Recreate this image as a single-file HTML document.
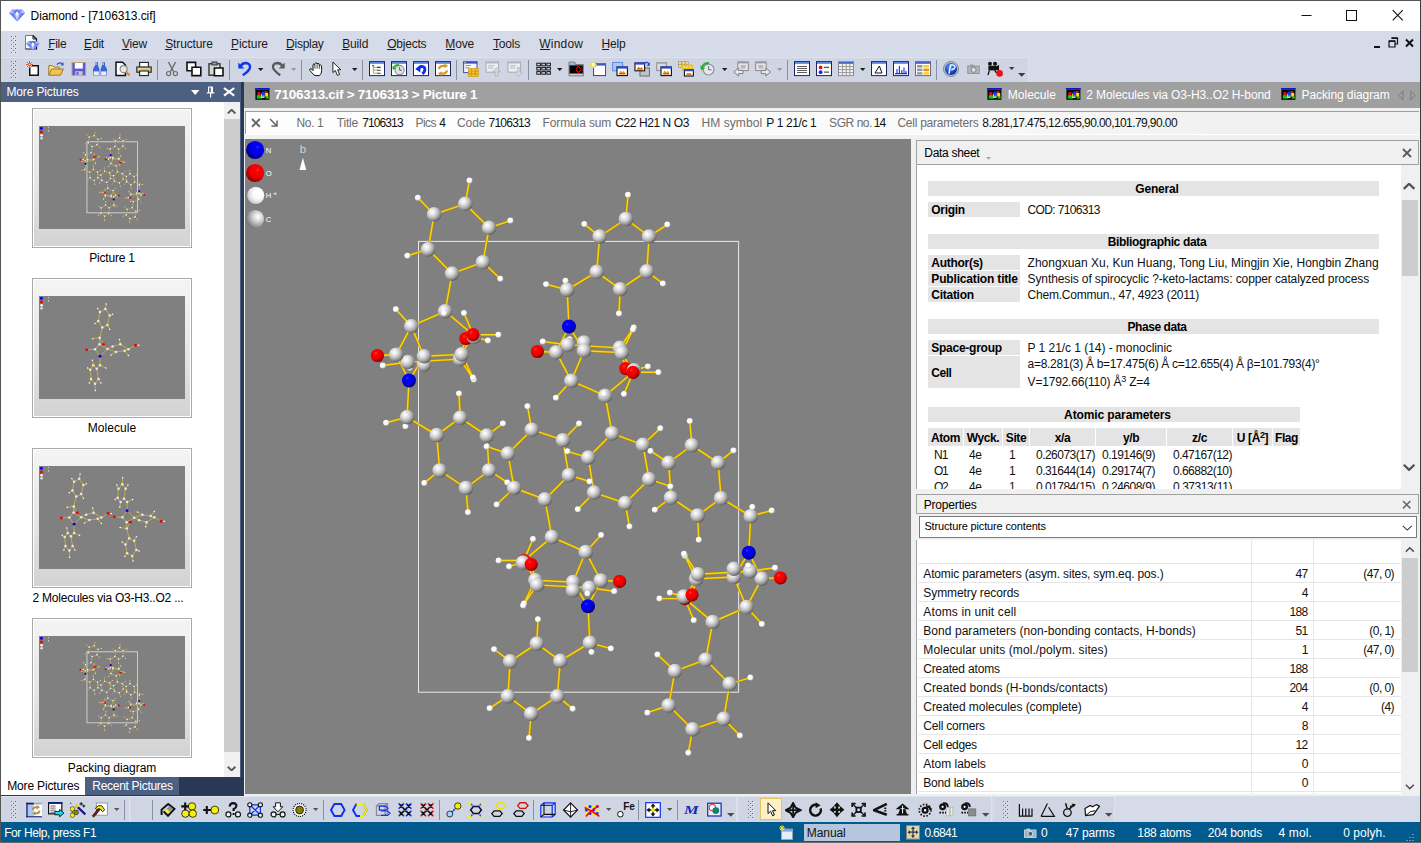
<!DOCTYPE html>
<html><head><meta charset="utf-8"><title>Diamond - [7106313.cif]</title>
<style>
html,body{margin:0;padding:0;overflow:hidden;}
html{font-family:"Liberation Sans",sans-serif;width:1421px;height:843px;}
body{width:1421px;height:843px;overflow:hidden;background:#fff;position:relative;font-family:"Liberation Sans",sans-serif;font-size:12px;}
div,span.t,svg{position:absolute;}
span.t{white-space:pre;}
u{text-decoration:underline;text-underline-offset:1px;}
</style></head>
<body>
<div style="left:0px;top:0px;width:1421px;height:31px;background:#fff;"></div>
<span class="t" style="top:8.84px;font-size:12px;line-height:14px;color:#000;letter-spacing:-0.105px;left:30.6px;">Diamond - [7106313.cif]</span>
<div style="left:0px;top:31px;width:1421px;height:26px;background:#D6DBE9;"></div>
<span class="t" style="top:36.64px;font-size:12px;line-height:14px;color:#1b1b1b;letter-spacing:-0.361px;left:48.3px;">File</span>
<span class="t" style="top:36.64px;font-size:12px;line-height:14px;color:#1b1b1b;letter-spacing:-0.197px;left:84.1px;">Edit</span>
<span class="t" style="top:36.64px;font-size:12px;line-height:14px;color:#1b1b1b;letter-spacing:-0.199px;left:122px;">View</span>
<span class="t" style="top:36.64px;font-size:12px;line-height:14px;color:#1b1b1b;letter-spacing:-0.121px;left:165.2px;">Structure</span>
<span class="t" style="top:36.64px;font-size:12px;line-height:14px;color:#1b1b1b;letter-spacing:-0.051px;left:231px;">Picture</span>
<span class="t" style="top:36.64px;font-size:12px;line-height:14px;color:#1b1b1b;letter-spacing:-0.266px;left:286.1px;">Display</span>
<span class="t" style="top:36.64px;font-size:12px;line-height:14px;color:#1b1b1b;letter-spacing:-0.138px;left:342.2px;">Build</span>
<span class="t" style="top:36.64px;font-size:12px;line-height:14px;color:#1b1b1b;letter-spacing:-0.213px;left:387.2px;">Objects</span>
<span class="t" style="top:36.64px;font-size:12px;line-height:14px;color:#1b1b1b;letter-spacing:-0.161px;left:445.3px;">Move</span>
<span class="t" style="top:36.64px;font-size:12px;line-height:14px;color:#1b1b1b;letter-spacing:-0.203px;left:493px;">Tools</span>
<span class="t" style="top:36.64px;font-size:12px;line-height:14px;color:#1b1b1b;letter-spacing:0.202px;left:539.3px;">Window</span>
<span class="t" style="top:36.64px;font-size:12px;line-height:14px;color:#1b1b1b;letter-spacing:-0.172px;left:601.4px;">Help</span>
<div style="left:0px;top:57px;width:1421px;height:25px;background:#D6DBE9;"></div>
<div style="left:1px;top:57px;width:1028px;height:25px;background:#D0D5E4;border-top:1px solid #DEE3EF;border-right:1px solid #DEE3EF;box-sizing:border-box;"></div>
<div style="left:0px;top:82px;width:240px;height:20px;background:#4D6082;"></div>
<span class="t" style="top:84.54px;font-size:12px;line-height:14px;color:#fff;letter-spacing:-0.133px;left:6.4px;">More Pictures</span>
<div style="left:0px;top:102px;width:240px;height:675px;background:#fff;"></div>
<div style="left:224px;top:102px;width:15.5px;height:675px;background:#F0F0F0;"></div>
<div style="left:224px;top:119px;width:15.5px;height:633px;background:#CDCDCD;"></div>
<div style="left:0px;top:777px;width:244px;height:19px;background:#293955;"></div>
<div style="left:1px;top:777px;width:84px;height:18px;background:#fff;"></div>
<div style="left:85px;top:777px;width:94px;height:18px;background:#4D6082;"></div>
<span class="t" style="top:779.24px;font-size:12px;line-height:14px;color:#000;letter-spacing:-0.149px;left:7.2px;">More Pictures</span>
<span class="t" style="top:779.24px;font-size:12px;line-height:14px;color:#fff;letter-spacing:-0.294px;left:92.3px;">Recent Pictures</span>
<div style="left:240px;top:82px;width:1px;height:695px;background:#4D6082;"></div>
<div style="left:241px;top:82px;width:3px;height:714px;background:#293955;"></div>
<div style="left:244px;top:82px;width:1177px;height:26px;background:#A0A0A0;"></div>
<span class="t" style="top:87.32px;font-size:13.5px;line-height:16px;color:#fff;letter-spacing:-0.286px;font-weight:700;left:274.3px;">7106313.cif &gt; 7106313 &gt; Picture 1</span>
<span class="t" style="top:88.14px;font-size:12px;line-height:14px;color:#fff;letter-spacing:0.034px;left:1007.7px;">Molecule</span>
<span class="t" style="top:88.14px;font-size:12px;line-height:14px;color:#fff;letter-spacing:-0.070px;left:1086.2px;">2 Molecules via O3-H3..O2 H-bond</span>
<span class="t" style="top:88.14px;font-size:12px;line-height:14px;color:#fff;letter-spacing:-0.086px;left:1301.5px;">Packing diagram</span>
<div style="left:244px;top:108px;width:1177px;height:31px;background:#F0F0F0;"></div>
<div style="left:245px;top:111px;width:1174px;height:23px;background:linear-gradient(90deg,#FDFDFD 0%,#FAFAFA 60%,#F0F0F0 85%);border-top:1px solid #A0A0A0;border-left:1px solid #A0A0A0;box-sizing:border-box;"></div>
<div style="left:245px;top:134px;width:1174px;height:1px;background:#fff;"></div>
<span class="t" style="top:116.24px;font-size:12px;line-height:14px;color:#6d6d6d;letter-spacing:-0.398px;left:296.6px;">No. 1</span>
<span class="t" style="top:116.24px;font-size:12px;line-height:14px;color:#6d6d6d;letter-spacing:-0.187px;left:336.8px;">Title</span>
<span class="t" style="top:116.24px;font-size:12px;line-height:14px;color:#111;letter-spacing:-0.888px;left:362.2px;">7106313</span>
<span class="t" style="top:116.24px;font-size:12px;line-height:14px;color:#6d6d6d;letter-spacing:-0.593px;left:415.5px;">Pics</span>
<span class="t" style="top:116.24px;font-size:12px;line-height:14px;color:#111;letter-spacing:-1.587px;left:439.2px;">4</span>
<span class="t" style="top:116.24px;font-size:12px;line-height:14px;color:#6d6d6d;letter-spacing:-0.147px;left:457.1px;">Code</span>
<span class="t" style="top:116.24px;font-size:12px;line-height:14px;color:#111;letter-spacing:-0.788px;left:488.6px;">7106313</span>
<span class="t" style="top:116.24px;font-size:12px;line-height:14px;color:#6d6d6d;letter-spacing:-0.129px;left:542.6px;">Formula sum</span>
<span class="t" style="top:116.24px;font-size:12px;line-height:14px;color:#111;letter-spacing:-0.425px;left:615.3px;">C22 H21 N O3</span>
<span class="t" style="top:116.24px;font-size:12px;line-height:14px;color:#6d6d6d;letter-spacing:0.087px;left:701.4px;">HM symbol</span>
<span class="t" style="top:116.24px;font-size:12px;line-height:14px;color:#111;letter-spacing:-0.383px;left:766.3px;">P 1 21/c 1</span>
<span class="t" style="top:116.24px;font-size:12px;line-height:14px;color:#6d6d6d;letter-spacing:-0.447px;left:829.1px;">SGR no.</span>
<span class="t" style="top:116.24px;font-size:12px;line-height:14px;color:#111;letter-spacing:-0.980px;left:873.8px;">14</span>
<span class="t" style="top:116.24px;font-size:12px;line-height:14px;color:#6d6d6d;letter-spacing:-0.247px;left:897.4px;">Cell parameters</span>
<span class="t" style="top:116.24px;font-size:12px;line-height:14px;color:#111;letter-spacing:-0.584px;left:982.3px;">8.281,17.475,12.655,90.00,101.79,90.00</span>
<div style="left:244px;top:139px;width:1px;height:657px;background:#F0F0F0;"></div>
<div style="left:245px;top:139px;width:666px;height:655px;background:#808080;"></div>
<div style="left:245px;top:794px;width:672px;height:2px;background:#F0F0F0;"></div>
<div style="left:911px;top:139px;width:6px;height:657px;background:#F0F0F0;"></div>
<div style="left:917px;top:139px;width:504px;height:657px;background:#F0F0F0;"></div>
<div style="left:0px;top:796px;width:1421px;height:26px;background:#D6DBE9;"></div>
<div style="left:1px;top:796px;width:129px;height:26px;background:#D0D5E4;border-top:1px solid #DEE3EF;border-right:1px solid #DEE3EF;box-sizing:border-box;"></div>
<div style="left:131px;top:796px;width:606px;height:26px;background:#D0D5E4;border-top:1px solid #DEE3EF;border-right:1px solid #DEE3EF;box-sizing:border-box;"></div>
<div style="left:739px;top:796px;width:253px;height:26px;background:#D0D5E4;border-top:1px solid #DEE3EF;border-right:1px solid #DEE3EF;box-sizing:border-box;"></div>
<div style="left:994px;top:796px;width:121px;height:26px;background:#D0D5E4;border-top:1px solid #DEE3EF;border-right:1px solid #DEE3EF;box-sizing:border-box;"></div>
<div style="left:0px;top:822px;width:1421px;height:21px;background:#005A8E;"></div>
<span class="t" style="top:825.64px;font-size:12px;line-height:14px;color:#fff;letter-spacing:-0.410px;left:4.2px;">For Help, press F1</span>
<div style="left:804px;top:824px;width:96px;height:17px;background:#B5C7DE;"></div>
<span class="t" style="top:825.64px;font-size:12px;line-height:14px;color:#111;letter-spacing:-0.077px;left:806.8px;">Manual</span>
<span class="t" style="top:825.64px;font-size:12px;line-height:14px;color:#fff;letter-spacing:-0.684px;left:924.4px;">0.6841</span>
<span class="t" style="top:825.64px;font-size:12px;line-height:14px;color:#fff;letter-spacing:-0.688px;left:1041px;">0</span>
<span class="t" style="top:825.64px;font-size:12px;line-height:14px;color:#fff;letter-spacing:-0.154px;left:1065.7px;">47 parms</span>
<span class="t" style="top:825.64px;font-size:12px;line-height:14px;color:#fff;letter-spacing:-0.261px;left:1137.3px;">188 atoms</span>
<span class="t" style="top:825.64px;font-size:12px;line-height:14px;color:#fff;letter-spacing:-0.196px;left:1207.7px;">204 bonds</span>
<span class="t" style="top:825.64px;font-size:12px;line-height:14px;color:#fff;letter-spacing:0.119px;left:1278.6px;">4 mol.</span>
<span class="t" style="top:825.64px;font-size:12px;line-height:14px;color:#fff;letter-spacing:0.021px;left:1343.3px;">0 polyh.</span>
<div style="left:0px;top:0px;width:1421px;height:1px;background:#555555;"></div>
<div style="left:0px;top:0px;width:1px;height:843px;background:#555555;"></div>
<div style="left:1420px;top:0px;width:1px;height:843px;background:#3C3C3C;"></div>
<div style="left:0px;top:842px;width:1421px;height:1px;background:#6A6A6A;"></div>
<div style="left:32px;top:108px;width:160px;height:139.5px;background:linear-gradient(180deg,#F4F4F4 0%,#E6E6E6 55%,#D2D2D2 100%);border:1px solid #A9A9A9;box-sizing:border-box;box-shadow:inset 0 0 0 1px #fff;"></div>
<div style="left:39px;top:126px;width:146px;height:102.5px;background:#808080;"></div>
<span class="t" style="top:251.04px;font-size:12px;line-height:14px;color:#000;letter-spacing:-0.195px;left:-38px;width:300px;text-align:center;">Picture 1</span>
<div style="left:32px;top:278px;width:160px;height:139.5px;background:linear-gradient(180deg,#F4F4F4 0%,#E6E6E6 55%,#D2D2D2 100%);border:1px solid #A9A9A9;box-sizing:border-box;box-shadow:inset 0 0 0 1px #fff;"></div>
<div style="left:39px;top:296px;width:146px;height:102.5px;background:#808080;"></div>
<span class="t" style="top:421.04px;font-size:12px;line-height:14px;color:#000;letter-spacing:0.059px;left:-38px;width:300px;text-align:center;">Molecule</span>
<div style="left:32px;top:448px;width:160px;height:139.5px;background:linear-gradient(180deg,#F4F4F4 0%,#E6E6E6 55%,#D2D2D2 100%);border:1px solid #A9A9A9;box-sizing:border-box;box-shadow:inset 0 0 0 1px #fff;"></div>
<div style="left:39px;top:466px;width:146px;height:102.5px;background:#808080;"></div>
<span class="t" style="top:591.04px;font-size:12px;line-height:14px;color:#000;letter-spacing:-0.221px;left:-42px;width:300px;text-align:center;">2 Molecules via O3-H3..O2 ...</span>
<div style="left:32px;top:618px;width:160px;height:139.5px;background:linear-gradient(180deg,#F4F4F4 0%,#E6E6E6 55%,#D2D2D2 100%);border:1px solid #A9A9A9;box-sizing:border-box;box-shadow:inset 0 0 0 1px #fff;"></div>
<div style="left:39px;top:636px;width:146px;height:102.5px;background:#808080;"></div>
<span class="t" style="top:761.04px;font-size:12px;line-height:14px;color:#000;letter-spacing:-0.066px;left:-38px;width:300px;text-align:center;">Packing diagram</span>
<div style="left:916px;top:140px;width:503px;height:25px;background:#F0F0F0;border:1px solid #A0A0A0;box-sizing:border-box;"></div>
<span class="t" style="top:145.84px;font-size:12px;line-height:14px;color:#000;letter-spacing:-0.305px;left:924.3px;">Data sheet</span>
<div style="left:916px;top:165px;width:485px;height:324px;background:#fff;border-left:1px solid #A0A0A0;box-sizing:border-box;"></div>
<div style="left:1401px;top:165px;width:17px;height:324px;background:#F0F0F0;"></div>
<div style="left:1402px;top:200px;width:16px;height:76px;background:#CDCDCD;"></div>
<div style="left:928px;top:181px;width:451px;height:15px;background:#E4E4E4;"></div>
<span class="t" style="top:182.24px;font-size:12px;line-height:14px;color:#000;letter-spacing:-0.172px;font-weight:700;left:1007.0px;width:300px;text-align:center;">General</span>
<div style="left:928px;top:202px;width:92px;height:15px;background:#E4E4E4;"></div>
<span class="t" style="top:203.24px;font-size:12px;line-height:14px;color:#000;letter-spacing:-0.307px;font-weight:700;left:931.3px;">Origin</span>
<span class="t" style="top:203.24px;font-size:12px;line-height:14px;color:#111;letter-spacing:-0.647px;left:1027.6px;">COD: 7106313</span>
<div style="left:928px;top:234px;width:451px;height:15px;background:#E4E4E4;"></div>
<span class="t" style="top:235.24px;font-size:12px;line-height:14px;color:#000;letter-spacing:-0.344px;font-weight:700;left:1007.0px;width:300px;text-align:center;">Bibliographic data</span>
<div style="left:928px;top:255px;width:92px;height:15px;background:#E4E4E4;"></div>
<span class="t" style="top:256.24px;font-size:12px;line-height:14px;color:#000;letter-spacing:-0.278px;font-weight:700;left:931.3px;">Author(s)</span>
<div style="left:928px;top:271px;width:92px;height:15px;background:#E4E4E4;"></div>
<span class="t" style="top:272.24px;font-size:12px;line-height:14px;color:#000;letter-spacing:-0.167px;font-weight:700;left:931.3px;">Publication title</span>
<div style="left:928px;top:287px;width:92px;height:15px;background:#E4E4E4;"></div>
<span class="t" style="top:288.24px;font-size:12px;line-height:14px;color:#000;letter-spacing:-0.271px;font-weight:700;left:931.3px;">Citation</span>
<span class="t" style="top:256.24px;font-size:12px;line-height:14px;color:#111;letter-spacing:0.005px;left:1027.6px;">Zhongxuan Xu, Kun Huang, Tong Liu, Mingjin Xie, Hongbin Zhang</span>
<span class="t" style="top:272.24px;font-size:12px;line-height:14px;color:#111;letter-spacing:-0.113px;left:1027.6px;">Synthesis of spirocyclic ?-keto-lactams: copper catalyzed process</span>
<span class="t" style="top:288.24px;font-size:12px;line-height:14px;color:#111;letter-spacing:-0.220px;left:1027.6px;">Chem.Commun., 47, 4923 (2011)</span>
<div style="left:928px;top:319px;width:451px;height:15px;background:#E4E4E4;"></div>
<span class="t" style="top:320.24px;font-size:12px;line-height:14px;color:#000;letter-spacing:-0.438px;font-weight:700;left:1007.0px;width:300px;text-align:center;">Phase data</span>
<div style="left:928px;top:340px;width:92px;height:15px;background:#E4E4E4;"></div>
<span class="t" style="top:341.24px;font-size:12px;line-height:14px;color:#000;letter-spacing:-0.259px;font-weight:700;left:931.3px;">Space-group</span>
<div style="left:928px;top:356px;width:92px;height:32px;background:#E4E4E4;"></div>
<span class="t" style="top:365.64px;font-size:12px;line-height:14px;color:#000;letter-spacing:-0.504px;font-weight:700;left:931.3px;">Cell</span>
<span class="t" style="top:341.24px;font-size:12px;line-height:14px;color:#111;letter-spacing:-0.049px;left:1027.6px;">P 1 21/c 1 (14) - monoclinic</span>
<span class="t" style="top:357.24px;font-size:12px;line-height:14px;color:#111;letter-spacing:-0.307px;left:1027.6px;">a=8.281(3) Å b=17.475(6) Å c=12.655(4) Å β=101.793(4)°</span>
<span class="t" style="top:375.24px;font-size:12px;line-height:14px;color:#111;letter-spacing:-0.200px;left:1027.6px;"><span>V=1792.66(110) Å<sup style="font-size:9px;line-height:0;vertical-align:4px">3</sup> Z=4</span></span>
<div style="left:928px;top:407px;width:372px;height:15px;background:#E4E4E4;"></div>
<span class="t" style="top:408.24px;font-size:12px;line-height:14px;color:#000;letter-spacing:-0.113px;font-weight:700;left:967.5px;width:300px;text-align:center;">Atomic parameters</span>
<div style="left:928px;top:428px;width:35px;height:18px;background:#E4E4E4;"></div>
<span class="t" style="top:431.24px;font-size:12px;line-height:14px;color:#000;letter-spacing:-0.400px;font-weight:700;left:795.5px;width:300px;text-align:center;">Atom</span>
<div style="left:964px;top:428px;width:38px;height:18px;background:#E4E4E4;"></div>
<span class="t" style="top:431.24px;font-size:12px;line-height:14px;color:#000;letter-spacing:-0.400px;font-weight:700;left:833.0px;width:300px;text-align:center;">Wyck.</span>
<div style="left:1003px;top:428px;width:26px;height:18px;background:#E4E4E4;"></div>
<span class="t" style="top:431.24px;font-size:12px;line-height:14px;color:#000;letter-spacing:-0.400px;font-weight:700;left:866.0px;width:300px;text-align:center;">Site</span>
<div style="left:1030px;top:428px;width:65px;height:18px;background:#E4E4E4;"></div>
<span class="t" style="top:431.24px;font-size:12px;line-height:14px;color:#000;letter-spacing:-0.400px;font-weight:700;left:912.5px;width:300px;text-align:center;">x/a</span>
<div style="left:1096px;top:428px;width:70px;height:18px;background:#E4E4E4;"></div>
<span class="t" style="top:431.24px;font-size:12px;line-height:14px;color:#000;letter-spacing:-0.400px;font-weight:700;left:981.0px;width:300px;text-align:center;">y/b</span>
<div style="left:1167px;top:428px;width:65px;height:18px;background:#E4E4E4;"></div>
<span class="t" style="top:431.24px;font-size:12px;line-height:14px;color:#000;letter-spacing:-0.400px;font-weight:700;left:1049.5px;width:300px;text-align:center;">z/c</span>
<div style="left:1233px;top:428px;width:39px;height:18px;background:#E4E4E4;"></div>
<span class="t" style="top:431.24px;font-size:12px;line-height:14px;color:#000;letter-spacing:-0.400px;font-weight:700;left:1102.5px;width:300px;text-align:center;"><span>U [Å<sup style="font-size:9px;line-height:0;vertical-align:4px">2</sup>]</span></span>
<div style="left:1273px;top:428px;width:27px;height:18px;background:#E4E4E4;"></div>
<span class="t" style="top:431.24px;font-size:12px;line-height:14px;color:#000;letter-spacing:-0.400px;font-weight:700;left:1136.5px;width:300px;text-align:center;">Flag</span>
<div style="left:918px;top:446px;width:483px;height:43px;overflow:hidden;">
<span class="t" style="top:2.24px;font-size:12px;line-height:14px;color:#111;letter-spacing:-0.922px;left:16px;">N1</span>
<span class="t" style="top:2.24px;font-size:12px;line-height:14px;color:#111;letter-spacing:-0.430px;left:51px;">4e</span>
<span class="t" style="top:2.24px;font-size:12px;line-height:14px;color:#111;letter-spacing:-1.188px;left:91px;">1</span>
<span class="t" style="top:2.24px;font-size:12px;line-height:14px;color:#111;letter-spacing:-0.520px;left:118px;">0.26073(17)</span>
<span class="t" style="top:2.24px;font-size:12px;line-height:14px;color:#111;letter-spacing:-0.505px;left:184px;">0.19146(9)</span>
<span class="t" style="top:2.24px;font-size:12px;line-height:14px;color:#111;letter-spacing:-0.520px;left:255px;">0.47167(12)</span>
<span class="t" style="top:18.24px;font-size:12px;line-height:14px;color:#111;letter-spacing:-1.258px;left:16px;">O1</span>
<span class="t" style="top:18.24px;font-size:12px;line-height:14px;color:#111;letter-spacing:-0.430px;left:51px;">4e</span>
<span class="t" style="top:18.24px;font-size:12px;line-height:14px;color:#111;letter-spacing:-1.188px;left:91px;">1</span>
<span class="t" style="top:18.24px;font-size:12px;line-height:14px;color:#111;letter-spacing:-0.520px;left:118px;">0.31644(14)</span>
<span class="t" style="top:18.24px;font-size:12px;line-height:14px;color:#111;letter-spacing:-0.505px;left:184px;">0.29174(7)</span>
<span class="t" style="top:18.24px;font-size:12px;line-height:14px;color:#111;letter-spacing:-0.520px;left:255px;">0.66882(10)</span>
<span class="t" style="top:34.24px;font-size:12px;line-height:14px;color:#111;letter-spacing:-1.258px;left:16px;">O2</span>
<span class="t" style="top:34.24px;font-size:12px;line-height:14px;color:#111;letter-spacing:-0.430px;left:51px;">4e</span>
<span class="t" style="top:34.24px;font-size:12px;line-height:14px;color:#111;letter-spacing:-1.188px;left:91px;">1</span>
<span class="t" style="top:34.24px;font-size:12px;line-height:14px;color:#111;letter-spacing:-0.520px;left:118px;">0.01784(15)</span>
<span class="t" style="top:34.24px;font-size:12px;line-height:14px;color:#111;letter-spacing:-0.505px;left:184px;">0.24608(9)</span>
<span class="t" style="top:34.24px;font-size:12px;line-height:14px;color:#111;letter-spacing:-0.439px;left:255px;">0.37313(11)</span>
</div>
<div style="left:916px;top:494px;width:503px;height:20px;background:#F0F0F0;border:1px solid #A0A0A0;box-sizing:border-box;"></div>
<span class="t" style="top:497.64px;font-size:12px;line-height:14px;color:#000;letter-spacing:-0.170px;left:923.7px;">Properties</span>
<div style="left:918.5px;top:516px;width:498.5px;height:22px;background:#fff;border:1px solid #7A7A7A;box-sizing:border-box;"></div>
<span class="t" style="top:519.99px;font-size:11px;line-height:13px;color:#000;letter-spacing:-0.148px;left:924.4px;">Structure picture contents</span>
<div style="left:916px;top:540px;width:485px;height:254px;background:#fff;border-left:1px solid #A0A0A0;box-sizing:border-box;"></div>
<div style="left:1401px;top:540px;width:17px;height:254px;background:#F0F0F0;"></div>
<div style="left:1402px;top:558px;width:16px;height:114px;background:#CDCDCD;"></div>
<div style="left:1251px;top:540px;width:1px;height:254px;background:#E6E6E6;"></div>
<div style="left:1313px;top:540px;width:1px;height:254px;background:#E6E6E6;"></div>
<div style="left:918px;top:563px;width:483px;height:1px;background:#E6E6E6;"></div>
<div style="left:918px;top:582px;width:483px;height:1px;background:#E6E6E6;"></div>
<div style="left:918px;top:601px;width:483px;height:1px;background:#E6E6E6;"></div>
<div style="left:918px;top:620px;width:483px;height:1px;background:#E6E6E6;"></div>
<div style="left:918px;top:639px;width:483px;height:1px;background:#E6E6E6;"></div>
<div style="left:918px;top:658px;width:483px;height:1px;background:#E6E6E6;"></div>
<div style="left:918px;top:677px;width:483px;height:1px;background:#E6E6E6;"></div>
<div style="left:918px;top:696px;width:483px;height:1px;background:#E6E6E6;"></div>
<div style="left:918px;top:715px;width:483px;height:1px;background:#E6E6E6;"></div>
<div style="left:918px;top:734px;width:483px;height:1px;background:#E6E6E6;"></div>
<div style="left:918px;top:753px;width:483px;height:1px;background:#E6E6E6;"></div>
<div style="left:918px;top:772px;width:483px;height:1px;background:#E6E6E6;"></div>
<div style="left:918px;top:791px;width:483px;height:1px;background:#E6E6E6;"></div>
<span class="t" style="top:566.84px;font-size:12px;line-height:14px;color:#111;letter-spacing:-0.145px;left:923.3px;">Atomic parameters (asym. sites, sym.eq. pos.)</span>
<span class="t" style="top:566.84px;font-size:12px;line-height:14px;color:#111;letter-spacing:-0.600px;right:113.30px;">47</span>
<span class="t" style="top:566.84px;font-size:12px;line-height:14px;color:#111;letter-spacing:-0.550px;right:26.95px;">(47, 0)</span>
<span class="t" style="top:585.84px;font-size:12px;line-height:14px;color:#111;letter-spacing:-0.085px;left:923.3px;">Symmetry records</span>
<span class="t" style="top:585.84px;font-size:12px;line-height:14px;color:#111;letter-spacing:-0.600px;right:113.30px;">4</span>
<span class="t" style="top:604.84px;font-size:12px;line-height:14px;color:#111;letter-spacing:0.128px;left:923.3px;">Atoms in unit cell</span>
<span class="t" style="top:604.84px;font-size:12px;line-height:14px;color:#111;letter-spacing:-0.600px;right:113.30px;">188</span>
<span class="t" style="top:623.84px;font-size:12px;line-height:14px;color:#111;letter-spacing:0.050px;left:923.3px;">Bond parameters (non-bonding contacts, H-bonds)</span>
<span class="t" style="top:623.84px;font-size:12px;line-height:14px;color:#111;letter-spacing:-0.600px;right:113.30px;">51</span>
<span class="t" style="top:623.84px;font-size:12px;line-height:14px;color:#111;letter-spacing:-0.550px;right:26.95px;">(0, 1)</span>
<span class="t" style="top:642.84px;font-size:12px;line-height:14px;color:#111;letter-spacing:0.089px;left:923.3px;">Molecular units (mol./polym. sites)</span>
<span class="t" style="top:642.84px;font-size:12px;line-height:14px;color:#111;letter-spacing:-0.600px;right:113.30px;">1</span>
<span class="t" style="top:642.84px;font-size:12px;line-height:14px;color:#111;letter-spacing:-0.550px;right:26.95px;">(47, 0)</span>
<span class="t" style="top:661.84px;font-size:12px;line-height:14px;color:#111;letter-spacing:-0.169px;left:923.3px;">Created atoms</span>
<span class="t" style="top:661.84px;font-size:12px;line-height:14px;color:#111;letter-spacing:-0.600px;right:113.30px;">188</span>
<span class="t" style="top:680.84px;font-size:12px;line-height:14px;color:#111;letter-spacing:0.033px;left:923.3px;">Created bonds (H-bonds/contacts)</span>
<span class="t" style="top:680.84px;font-size:12px;line-height:14px;color:#111;letter-spacing:-0.600px;right:113.30px;">204</span>
<span class="t" style="top:680.84px;font-size:12px;line-height:14px;color:#111;letter-spacing:-0.550px;right:26.95px;">(0, 0)</span>
<span class="t" style="top:699.84px;font-size:12px;line-height:14px;color:#111;letter-spacing:-0.056px;left:923.3px;">Created molecules (complete)</span>
<span class="t" style="top:699.84px;font-size:12px;line-height:14px;color:#111;letter-spacing:-0.600px;right:113.30px;">4</span>
<span class="t" style="top:699.84px;font-size:12px;line-height:14px;color:#111;letter-spacing:-0.550px;right:26.95px;">(4)</span>
<span class="t" style="top:718.84px;font-size:12px;line-height:14px;color:#111;letter-spacing:-0.211px;left:923.3px;">Cell corners</span>
<span class="t" style="top:718.84px;font-size:12px;line-height:14px;color:#111;letter-spacing:-0.600px;right:113.30px;">8</span>
<span class="t" style="top:737.84px;font-size:12px;line-height:14px;color:#111;letter-spacing:-0.320px;left:923.3px;">Cell edges</span>
<span class="t" style="top:737.84px;font-size:12px;line-height:14px;color:#111;letter-spacing:-0.600px;right:113.30px;">12</span>
<span class="t" style="top:756.84px;font-size:12px;line-height:14px;color:#111;letter-spacing:-0.018px;left:923.3px;">Atom labels</span>
<span class="t" style="top:756.84px;font-size:12px;line-height:14px;color:#111;letter-spacing:-0.600px;right:113.30px;">0</span>
<span class="t" style="top:775.84px;font-size:12px;line-height:14px;color:#111;letter-spacing:-0.202px;left:923.3px;">Bond labels</span>
<span class="t" style="top:775.84px;font-size:12px;line-height:14px;color:#111;letter-spacing:-0.600px;right:113.30px;">0</span>
<svg style="left:245px;top:139px" width="666" height="655" viewBox="245 139 666 655">
<defs>
<radialGradient id="gC" cx=".37" cy=".33" r=".7"><stop offset="0" stop-color="#fff"/><stop offset=".15" stop-color="#f3f3f3"/><stop offset=".4" stop-color="#d6d6d6"/><stop offset=".62" stop-color="#b2b2b2"/><stop offset=".82" stop-color="#878787"/><stop offset="1" stop-color="#585858"/></radialGradient>
<radialGradient id="gH" cx=".42" cy=".4" r=".62"><stop offset="0" stop-color="#fff"/><stop offset=".6" stop-color="#fafafa"/><stop offset="1" stop-color="#b4b4b4"/></radialGradient>
<radialGradient id="gO" cx=".37" cy=".33" r=".7"><stop offset="0" stop-color="#ff4638"/><stop offset=".18" stop-color="#ff0000"/><stop offset=".6" stop-color="#ee0000"/><stop offset=".85" stop-color="#b40000"/><stop offset="1" stop-color="#6a0000"/></radialGradient>
<radialGradient id="gN" cx=".37" cy=".33" r=".7"><stop offset="0" stop-color="#3838ff"/><stop offset=".18" stop-color="#0000ff"/><stop offset=".6" stop-color="#0000e4"/><stop offset=".85" stop-color="#0000a4"/><stop offset="1" stop-color="#00005c"/></radialGradient>
<radialGradient id="lC" cx=".66" cy=".38" r=".76"><stop offset="0" stop-color="#fff"/><stop offset=".15" stop-color="#f0f0f0"/><stop offset=".4" stop-color="#cdcdcd"/><stop offset=".65" stop-color="#a2a2a2"/><stop offset=".85" stop-color="#7e7e7e"/><stop offset="1" stop-color="#5c5c5c"/></radialGradient>
<radialGradient id="lH" cx=".64" cy=".4" r=".76"><stop offset="0" stop-color="#fff"/><stop offset=".4" stop-color="#fafafa"/><stop offset=".7" stop-color="#dcdcdc"/><stop offset="1" stop-color="#a2a2a2"/></radialGradient>
<radialGradient id="lO" cx=".64" cy=".34" r=".74"><stop offset="0" stop-color="#ff3a30"/><stop offset=".14" stop-color="#ff0000"/><stop offset=".55" stop-color="#ec0000"/><stop offset=".82" stop-color="#b00000"/><stop offset="1" stop-color="#640000"/></radialGradient>
<radialGradient id="lN" cx=".64" cy=".34" r=".74"><stop offset="0" stop-color="#3030ff"/><stop offset=".14" stop-color="#0000ff"/><stop offset=".55" stop-color="#0000e0"/><stop offset=".82" stop-color="#0000a0"/><stop offset="1" stop-color="#000058"/></radialGradient>
<circle id="aC" r="7.3" fill="url(#gC)"/><circle id="aH" r="3" fill="url(#gH)"/><circle id="aO" r="6.6" fill="url(#gO)"/><circle id="aN" r="7" fill="url(#gN)"/>
</defs>
<defs>
<path id="bp" d="M465.2 203.9L434.1 214.4M465.2 203.9L489.1 227.8M434.1 214.4L428.2 249.4M489.1 227.8L482.9 262.2M428.2 249.4L452.1 273.6M482.9 262.2L452.1 273.6M465.2 203.9L469.5 180.5M434.1 214.4L417.9 197.7M489.1 227.8L510.4 220.6M428.2 249.4L407.4 255.7M482.9 262.2L500.3 278.7M452.1 273.6L445.1 311.3M445.1 311.3L411.3 326.2M445.1 311.3L473.0 334.7M411.3 326.2L395.9 309.3M411.3 326.2L396.2 354.7M411.3 326.2L424.0 356.3M396.2 354.7L377.4 355.5M396.2 354.7L409.0 380.5M409.0 380.5L424.0 356.3M409.0 380.5L407.1 417.1M407.8 362.1L382.8 365.5M424.0 356.3L461.7 354.4M407.8 362.1L459.9 359.1M461.7 354.4L473.0 334.7M459.9 359.1L465.8 338.5M461.7 354.4L473.0 377.6M459.9 359.1L473.8 379.6M473.0 334.7L498.4 334.7M474.0 336.8L487.9 340.6M474.0 336.8L464.0 313.1M407.1 417.1L386.1 422.8M407.1 417.1L405.5 426.3M407.1 417.1L436.7 435.1M436.7 435.1L460.2 417.8M460.2 417.8L486.8 435.6M486.8 435.6L489.1 470.5M489.1 470.5L465.9 488.0M465.9 488.0L439.7 470.5M439.7 470.5L436.7 435.1M460.2 417.8L459.0 393.5M486.8 435.6L502.9 423.5M489.1 470.5L507.3 482.4M465.9 488.0L468.0 512.2M439.7 470.5L424.3 482.9M625.2 503.1L594.1 492.6M625.2 503.1L649.1 479.2M594.1 492.6L588.2 457.6M649.1 479.2L642.9 444.8M588.2 457.6L612.1 433.4M642.9 444.8L612.1 433.4M625.2 503.1L629.5 526.5M594.1 492.6L577.9 509.3M649.1 479.2L670.4 486.4M588.2 457.6L567.4 451.3M642.9 444.8L660.3 428.3M612.1 433.4L605.1 395.7M605.1 395.7L571.3 380.8M605.1 395.7L633.0 372.3M571.3 380.8L555.9 397.7M571.3 380.8L556.2 352.3M571.3 380.8L584.0 350.7M556.2 352.3L537.4 351.5M556.2 352.3L569.0 326.5M569.0 326.5L584.0 350.7M569.0 326.5L567.1 289.9M567.8 344.9L542.8 341.5M584.0 350.7L621.7 352.6M567.8 344.9L619.9 347.9M621.7 352.6L633.0 372.3M619.9 347.9L625.8 368.5M621.7 352.6L633.0 329.4M619.9 347.9L633.8 327.4M633.0 372.3L658.4 372.3M634.0 370.2L647.9 366.4M634.0 370.2L624.0 393.9M567.1 289.9L546.1 284.2M567.1 289.9L565.5 280.7M567.1 289.9L596.7 271.9M596.7 271.9L620.2 289.2M620.2 289.2L646.8 271.4M646.8 271.4L649.1 236.5M649.1 236.5L625.9 219.0M625.9 219.0L599.7 236.5M599.7 236.5L596.7 271.9M620.2 289.2L619.0 313.5M646.8 271.4L662.9 283.5M649.1 236.5L667.3 224.6M625.9 219.0L628.0 194.8M599.7 236.5L584.3 224.1M692.6 729.4L723.7 718.9M692.6 729.4L668.7 705.5M723.7 718.9L729.6 683.9M668.7 705.5L674.9 671.1M729.6 683.9L705.7 659.7M674.9 671.1L705.7 659.7M692.6 729.4L688.3 752.8M723.7 718.9L739.9 735.6M668.7 705.5L647.4 712.7M729.6 683.9L750.4 677.6M674.9 671.1L657.5 654.6M705.7 659.7L712.7 622.0M712.7 622.0L746.5 607.1M712.7 622.0L684.8 598.6M746.5 607.1L761.9 624.0M746.5 607.1L761.6 578.6M746.5 607.1L733.8 577.0M761.6 578.6L780.4 577.8M761.6 578.6L748.8 552.8M748.8 552.8L733.8 577.0M748.8 552.8L750.7 516.2M750.0 571.2L775.0 567.8M733.8 577.0L696.1 578.9M750.0 571.2L697.9 574.2M696.1 578.9L684.8 598.6M697.9 574.2L692.0 594.8M696.1 578.9L684.8 555.7M697.9 574.2L684.0 553.7M684.8 598.6L659.4 598.6M683.8 596.5L669.9 592.7M683.8 596.5L693.8 620.2M750.7 516.2L771.7 510.5M750.7 516.2L752.3 507.0M750.7 516.2L721.1 498.2M721.1 498.2L697.6 515.5M697.6 515.5L671.0 497.7M671.0 497.7L668.7 462.8M668.7 462.8L691.9 445.3M691.9 445.3L718.1 462.8M718.1 462.8L721.1 498.2M697.6 515.5L698.8 539.8M671.0 497.7L654.9 509.8M668.7 462.8L650.5 450.9M691.9 445.3L689.8 421.1M718.1 462.8L733.5 450.4M531.8 429.7L562.9 440.2M531.8 429.7L507.9 453.6M562.9 440.2L568.8 475.2M507.9 453.6L514.1 488.0M568.8 475.2L544.9 499.4M514.1 488.0L544.9 499.4M531.8 429.7L527.5 406.3M562.9 440.2L579.1 423.5M507.9 453.6L486.6 446.4M568.8 475.2L589.6 481.5M514.1 488.0L496.7 504.5M544.9 499.4L551.9 537.1M551.9 537.1L585.7 552.0M551.9 537.1L524.0 560.5M585.7 552.0L601.1 535.1M585.7 552.0L600.8 580.5M585.7 552.0L573.0 582.1M600.8 580.5L619.6 581.3M600.8 580.5L588.0 606.3M588.0 606.3L573.0 582.1M588.0 606.3L589.9 642.9M589.2 587.9L614.2 591.3M573.0 582.1L535.3 580.2M589.2 587.9L537.1 584.9M535.3 580.2L524.0 560.5M537.1 584.9L531.2 564.3M535.3 580.2L524.0 603.4M537.1 584.9L523.2 605.4M524.0 560.5L498.6 560.5M523.0 562.6L509.1 566.4M523.0 562.6L533.0 538.9M589.9 642.9L610.9 648.6M589.9 642.9L591.5 652.1M589.9 642.9L560.3 660.9M560.3 660.9L536.8 643.6M536.8 643.6L510.2 661.4M510.2 661.4L507.9 696.3M507.9 696.3L531.1 713.8M531.1 713.8L557.3 696.3M557.3 696.3L560.3 660.9M536.8 643.6L538.0 619.3M510.2 661.4L494.1 649.3M507.9 696.3L489.7 708.2M531.1 713.8L529.0 738.0M557.3 696.3L572.7 708.7" fill="none" stroke-linecap="round"/>
<g id="at">
<use href="#aH" x="409.6" y="367.8"/>
<use href="#aO" x="465.8" y="338.5"/>
<use href="#aH" x="464.0" y="313.1"/>
<use href="#aH" x="487.9" y="340.6"/>
<use href="#aC" x="474.0" y="336.8"/>
<use href="#aH" x="473.8" y="379.6"/>
<use href="#aC" x="459.9" y="359.1"/>
<use href="#aC" x="424.0" y="364.5"/>
<use href="#aC" x="407.8" y="362.1"/>
<use href="#aH" x="382.8" y="365.5"/>
<use href="#aO" x="473.0" y="334.7"/>
<use href="#aH" x="498.4" y="334.7"/>
<use href="#aC" x="461.7" y="354.4"/>
<use href="#aH" x="473.0" y="377.6"/>
<use href="#aC" x="424.0" y="356.3"/>
<use href="#aC" x="396.2" y="354.7"/>
<use href="#aO" x="377.4" y="355.5"/>
<use href="#aC" x="411.3" y="326.2"/>
<use href="#aH" x="395.9" y="309.3"/>
<use href="#aC" x="445.1" y="311.3"/>
<use href="#aH" x="444.0" y="313.1"/>
<use href="#aN" x="409.0" y="380.5"/>
<use href="#aH" x="405.5" y="426.3"/>
<use href="#aC" x="407.1" y="417.1"/>
<use href="#aH" x="386.1" y="422.8"/>
<use href="#aC" x="465.2" y="203.9"/>
<use href="#aC" x="434.1" y="214.4"/>
<use href="#aC" x="489.1" y="227.8"/>
<use href="#aC" x="428.2" y="249.4"/>
<use href="#aC" x="482.9" y="262.2"/>
<use href="#aC" x="452.1" y="273.6"/>
<use href="#aH" x="469.5" y="180.5"/>
<use href="#aH" x="417.9" y="197.7"/>
<use href="#aH" x="510.4" y="220.6"/>
<use href="#aH" x="407.4" y="255.7"/>
<use href="#aH" x="500.3" y="278.7"/>
<use href="#aC" x="436.7" y="435.1"/>
<use href="#aC" x="460.2" y="417.8"/>
<use href="#aC" x="486.8" y="435.6"/>
<use href="#aC" x="489.1" y="470.5"/>
<use href="#aC" x="465.9" y="488.0"/>
<use href="#aC" x="439.7" y="470.5"/>
<use href="#aH" x="459.0" y="393.5"/>
<use href="#aH" x="502.9" y="423.5"/>
<use href="#aH" x="507.3" y="482.4"/>
<use href="#aH" x="468.0" y="512.2"/>
<use href="#aH" x="424.3" y="482.9"/>
<use href="#aH" x="569.6" y="339.2"/>
<use href="#aO" x="625.8" y="368.5"/>
<use href="#aH" x="624.0" y="393.9"/>
<use href="#aH" x="647.9" y="366.4"/>
<use href="#aC" x="634.0" y="370.2"/>
<use href="#aH" x="633.8" y="327.4"/>
<use href="#aC" x="619.9" y="347.9"/>
<use href="#aC" x="584.0" y="342.5"/>
<use href="#aC" x="567.8" y="344.9"/>
<use href="#aH" x="542.8" y="341.5"/>
<use href="#aO" x="633.0" y="372.3"/>
<use href="#aH" x="658.4" y="372.3"/>
<use href="#aC" x="621.7" y="352.6"/>
<use href="#aH" x="633.0" y="329.4"/>
<use href="#aC" x="584.0" y="350.7"/>
<use href="#aC" x="556.2" y="352.3"/>
<use href="#aO" x="537.4" y="351.5"/>
<use href="#aC" x="571.3" y="380.8"/>
<use href="#aH" x="555.9" y="397.7"/>
<use href="#aC" x="605.1" y="395.7"/>
<use href="#aH" x="604.0" y="393.9"/>
<use href="#aN" x="569.0" y="326.5"/>
<use href="#aH" x="565.5" y="280.7"/>
<use href="#aC" x="567.1" y="289.9"/>
<use href="#aH" x="546.1" y="284.2"/>
<use href="#aC" x="625.2" y="503.1"/>
<use href="#aC" x="594.1" y="492.6"/>
<use href="#aC" x="649.1" y="479.2"/>
<use href="#aC" x="588.2" y="457.6"/>
<use href="#aC" x="642.9" y="444.8"/>
<use href="#aC" x="612.1" y="433.4"/>
<use href="#aH" x="629.5" y="526.5"/>
<use href="#aH" x="577.9" y="509.3"/>
<use href="#aH" x="670.4" y="486.4"/>
<use href="#aH" x="567.4" y="451.3"/>
<use href="#aH" x="660.3" y="428.3"/>
<use href="#aC" x="596.7" y="271.9"/>
<use href="#aC" x="620.2" y="289.2"/>
<use href="#aC" x="646.8" y="271.4"/>
<use href="#aC" x="649.1" y="236.5"/>
<use href="#aC" x="625.9" y="219.0"/>
<use href="#aC" x="599.7" y="236.5"/>
<use href="#aH" x="619.0" y="313.5"/>
<use href="#aH" x="662.9" y="283.5"/>
<use href="#aH" x="667.3" y="224.6"/>
<use href="#aH" x="628.0" y="194.8"/>
<use href="#aH" x="584.3" y="224.1"/>
<use href="#aH" x="733.5" y="450.4"/>
<use href="#aH" x="689.8" y="421.1"/>
<use href="#aH" x="650.5" y="450.9"/>
<use href="#aH" x="654.9" y="509.8"/>
<use href="#aH" x="698.8" y="539.8"/>
<use href="#aC" x="718.1" y="462.8"/>
<use href="#aC" x="691.9" y="445.3"/>
<use href="#aC" x="668.7" y="462.8"/>
<use href="#aC" x="671.0" y="497.7"/>
<use href="#aC" x="697.6" y="515.5"/>
<use href="#aC" x="721.1" y="498.2"/>
<use href="#aH" x="657.5" y="654.6"/>
<use href="#aH" x="750.4" y="677.6"/>
<use href="#aH" x="647.4" y="712.7"/>
<use href="#aH" x="739.9" y="735.6"/>
<use href="#aH" x="688.3" y="752.8"/>
<use href="#aC" x="705.7" y="659.7"/>
<use href="#aC" x="674.9" y="671.1"/>
<use href="#aC" x="729.6" y="683.9"/>
<use href="#aC" x="668.7" y="705.5"/>
<use href="#aC" x="723.7" y="718.9"/>
<use href="#aC" x="692.6" y="729.4"/>
<use href="#aH" x="771.7" y="510.5"/>
<use href="#aC" x="750.7" y="516.2"/>
<use href="#aH" x="752.3" y="507.0"/>
<use href="#aN" x="748.8" y="552.8"/>
<use href="#aH" x="713.8" y="620.2"/>
<use href="#aC" x="712.7" y="622.0"/>
<use href="#aH" x="761.9" y="624.0"/>
<use href="#aC" x="746.5" y="607.1"/>
<use href="#aO" x="780.4" y="577.8"/>
<use href="#aC" x="761.6" y="578.6"/>
<use href="#aC" x="733.8" y="577.0"/>
<use href="#aH" x="684.8" y="555.7"/>
<use href="#aC" x="696.1" y="578.9"/>
<use href="#aH" x="659.4" y="598.6"/>
<use href="#aO" x="684.8" y="598.6"/>
<use href="#aH" x="775.0" y="567.8"/>
<use href="#aC" x="750.0" y="571.2"/>
<use href="#aC" x="733.8" y="568.8"/>
<use href="#aC" x="697.9" y="574.2"/>
<use href="#aH" x="684.0" y="553.7"/>
<use href="#aC" x="683.8" y="596.5"/>
<use href="#aH" x="669.9" y="592.7"/>
<use href="#aH" x="693.8" y="620.2"/>
<use href="#aO" x="692.0" y="594.8"/>
<use href="#aH" x="748.2" y="565.5"/>
<use href="#aH" x="572.7" y="708.7"/>
<use href="#aH" x="529.0" y="738.0"/>
<use href="#aH" x="489.7" y="708.2"/>
<use href="#aH" x="494.1" y="649.3"/>
<use href="#aH" x="538.0" y="619.3"/>
<use href="#aC" x="557.3" y="696.3"/>
<use href="#aC" x="531.1" y="713.8"/>
<use href="#aC" x="507.9" y="696.3"/>
<use href="#aC" x="510.2" y="661.4"/>
<use href="#aC" x="536.8" y="643.6"/>
<use href="#aC" x="560.3" y="660.9"/>
<use href="#aH" x="496.7" y="504.5"/>
<use href="#aH" x="589.6" y="481.5"/>
<use href="#aH" x="486.6" y="446.4"/>
<use href="#aH" x="579.1" y="423.5"/>
<use href="#aH" x="527.5" y="406.3"/>
<use href="#aC" x="544.9" y="499.4"/>
<use href="#aC" x="514.1" y="488.0"/>
<use href="#aC" x="568.8" y="475.2"/>
<use href="#aC" x="507.9" y="453.6"/>
<use href="#aC" x="562.9" y="440.2"/>
<use href="#aC" x="531.8" y="429.7"/>
<use href="#aH" x="610.9" y="648.6"/>
<use href="#aC" x="589.9" y="642.9"/>
<use href="#aH" x="591.5" y="652.1"/>
<use href="#aN" x="588.0" y="606.3"/>
<use href="#aH" x="553.0" y="538.9"/>
<use href="#aC" x="551.9" y="537.1"/>
<use href="#aH" x="601.1" y="535.1"/>
<use href="#aC" x="585.7" y="552.0"/>
<use href="#aO" x="619.6" y="581.3"/>
<use href="#aC" x="600.8" y="580.5"/>
<use href="#aC" x="573.0" y="582.1"/>
<use href="#aH" x="524.0" y="603.4"/>
<use href="#aC" x="535.3" y="580.2"/>
<use href="#aH" x="498.6" y="560.5"/>
<use href="#aO" x="524.0" y="560.5"/>
<use href="#aH" x="614.2" y="591.3"/>
<use href="#aC" x="589.2" y="587.9"/>
<use href="#aC" x="573.0" y="590.3"/>
<use href="#aC" x="537.1" y="584.9"/>
<use href="#aH" x="523.2" y="605.4"/>
<use href="#aC" x="523.0" y="562.6"/>
<use href="#aH" x="509.1" y="566.4"/>
<use href="#aH" x="533.0" y="538.9"/>
<use href="#aO" x="531.2" y="564.3"/>
<use href="#aH" x="587.4" y="593.6"/>
</g></defs>
<rect x="418.5" y="241.4" width="320.1" height="450.80000000000007" fill="none" stroke="#e9e9e9" stroke-width="1"/>
<use href="#bp" stroke="#b08c10" stroke-width="2.4"/><use href="#bp" stroke="#ffd60a" stroke-width="1.4"/><use href="#at"/>
<circle cx="255.1" cy="150.0" r="9.1" fill="url(#lN)"/>
<text x="265.7" y="152.7" font-family="Liberation Sans" font-size="7.7" fill="#fff">N</text>
<circle cx="255.1" cy="173.0" r="9.1" fill="url(#lO)"/>
<text x="265.7" y="175.7" font-family="Liberation Sans" font-size="7.7" fill="#fff">O</text>
<circle cx="255.7" cy="195.3" r="8.6" fill="url(#lH)"/>
<text x="265.7" y="198.0" font-family="Liberation Sans" font-size="7.7" fill="#fff">H</text>
<circle cx="255.1" cy="218.9" r="9.0" fill="url(#lC)"/>
<text x="265.7" y="221.6" font-family="Liberation Sans" font-size="7.7" fill="#fff">C</text>
<path d="M272.6 193.6L276.4 192.2V195.4Z" fill="#cfcfcf"/>
<text x="299.8" y="153.3" font-family="Liberation Sans" font-size="11.5" fill="#d2d2d2">b</text>
<path d="M302.9 157.8L306.2 170H299.5Z" fill="#fff"/>
</svg>
<svg style="left:39px;top:126px" width="146" height="103" viewBox="9 21 146 103"><rect x="56.96" y="36.78" width="50.48" height="71.04" fill="none" stroke="#d6d6d6" stroke-width=".9"/><g transform="translate(82.2 72.3) scale(0.158) translate(-578.25 -466.2)"><use href="#bp" stroke="#d2b23c" stroke-width="3.9"/><use href="#at"/></g><circle cx="11.4" cy="23.2" r="1.5" fill="#0000f0"/><circle cx="11.4" cy="27" r="1.5" fill="#f00000"/><circle cx="11.6" cy="30.3" r="1.3" fill="#fff"/><circle cx="11.6" cy="33.3" r="1.3" fill="#e0e0e0"/><rect x="18" y="22" width=".8" height="1.2" fill="#ddd"/><rect x="18" y="25" width=".8" height="1.6" fill="#ddd"/></svg>
<svg style="left:39px;top:296px" width="146" height="103" viewBox="9 21 146 103"><path d="M75.36 34.07L79.66 40.43M79.66 40.43L77.43 49.90M77.43 49.90L72.26 52.48M72.26 52.48L68.31 46.11M68.31 46.11L70.03 36.99M70.03 36.99L75.36 34.07M75.36 34.07L76.22 28.91M79.66 40.43L82.59 39.23M77.43 49.90L79.66 54.20M68.31 46.11L65.04 48.52M70.03 36.99L67.62 33.55M72.26 52.48L69.68 62.80M69.68 62.80L62.80 63.66M69.68 62.80L69.51 69.17M69.68 62.80L73.47 69.34M69.51 69.17L65.04 74.33M65.04 74.33L56.78 74.85M65.04 74.33L70.03 81.21M70.03 81.21L77.43 73.98M69.51 69.17L77.43 73.98M77.43 73.98L86.03 76.91M86.03 76.91L94.63 75.71M94.63 75.71L98.42 74.33M98.42 74.33L90.33 69.34M90.33 69.34L82.59 71.40M82.59 71.40L77.43 73.98M98.42 74.33L105.47 70.20M105.47 70.20L108.74 70.20M90.33 69.34L89.47 64.52M86.03 76.91L80.87 80.01M94.63 75.71L98.42 80.52M70.03 81.21L70.03 90.33M70.03 90.33L75.71 92.91M70.03 90.33L66.76 93.77M66.76 93.77L63.32 90.33M63.32 90.33L60.22 94.63M60.22 94.63L61.08 104.09M61.08 104.09L65.04 108.74M65.04 108.74L68.48 104.09M68.48 104.09L66.76 93.77M63.32 90.33L62.46 85.17M60.22 94.63L57.64 92.91M61.08 104.09L59.36 108.05M65.04 108.74L65.38 115.62M68.48 104.09L70.89 108.05" stroke="#d9b83a" stroke-width=".75" fill="none" stroke-linecap="round"/><circle cx="75.36" cy="34.07" r="1.25" fill="#e8e8e8"/><circle cx="79.66" cy="40.43" r="1.25" fill="#e8e8e8"/><circle cx="77.43" cy="49.90" r="1.25" fill="#e8e8e8"/><circle cx="72.26" cy="52.48" r="1.25" fill="#e8e8e8"/><circle cx="68.31" cy="46.11" r="1.25" fill="#e8e8e8"/><circle cx="70.03" cy="36.99" r="1.25" fill="#e8e8e8"/><circle cx="76.22" cy="28.91" r="0.75" fill="#fff"/><circle cx="82.59" cy="39.23" r="0.75" fill="#fff"/><circle cx="79.66" cy="54.20" r="0.75" fill="#fff"/><circle cx="65.04" cy="48.52" r="0.75" fill="#fff"/><circle cx="67.62" cy="33.55" r="0.75" fill="#fff"/><circle cx="69.68" cy="62.80" r="1.25" fill="#e8e8e8"/><circle cx="62.80" cy="63.66" r="0.75" fill="#fff"/><circle cx="69.51" cy="69.17" r="1.25" fill="#e8e8e8"/><circle cx="73.47" cy="69.34" r="1.45" fill="#f00000"/><circle cx="65.04" cy="74.33" r="1.25" fill="#e8e8e8"/><circle cx="56.78" cy="74.85" r="1.45" fill="#f00000"/><circle cx="70.03" cy="81.21" r="1.45" fill="#0000f0"/><circle cx="77.43" cy="73.98" r="1.25" fill="#e8e8e8"/><circle cx="86.03" cy="76.91" r="1.25" fill="#e8e8e8"/><circle cx="94.63" cy="75.71" r="1.25" fill="#e8e8e8"/><circle cx="98.42" cy="74.33" r="1.25" fill="#e8e8e8"/><circle cx="90.33" cy="69.34" r="1.25" fill="#e8e8e8"/><circle cx="82.59" cy="71.40" r="1.25" fill="#e8e8e8"/><circle cx="105.47" cy="70.20" r="1.45" fill="#f00000"/><circle cx="108.74" cy="70.20" r="0.75" fill="#fff"/><circle cx="89.47" cy="64.52" r="0.75" fill="#fff"/><circle cx="80.87" cy="80.01" r="0.75" fill="#fff"/><circle cx="98.42" cy="80.52" r="0.75" fill="#fff"/><circle cx="70.03" cy="90.33" r="1.25" fill="#e8e8e8"/><circle cx="75.71" cy="92.91" r="0.75" fill="#fff"/><circle cx="66.76" cy="93.77" r="1.25" fill="#e8e8e8"/><circle cx="63.32" cy="90.33" r="1.25" fill="#e8e8e8"/><circle cx="60.22" cy="94.63" r="1.25" fill="#e8e8e8"/><circle cx="61.08" cy="104.09" r="1.25" fill="#e8e8e8"/><circle cx="65.04" cy="108.74" r="1.25" fill="#e8e8e8"/><circle cx="68.48" cy="104.09" r="1.25" fill="#e8e8e8"/><circle cx="62.46" cy="85.17" r="0.75" fill="#fff"/><circle cx="57.64" cy="92.91" r="0.75" fill="#fff"/><circle cx="59.36" cy="108.05" r="0.75" fill="#fff"/><circle cx="65.38" cy="115.62" r="0.75" fill="#fff"/><circle cx="70.89" cy="108.05" r="0.75" fill="#fff"/><circle cx="11.4" cy="23.2" r="1.5" fill="#0000f0"/><circle cx="11.4" cy="27" r="1.5" fill="#f00000"/><circle cx="11.6" cy="30.3" r="1.3" fill="#fff"/><circle cx="11.6" cy="33.3" r="1.3" fill="#e0e0e0"/><rect x="18" y="22" width=".8" height="1.2" fill="#ddd"/><rect x="18" y="25" width=".8" height="1.6" fill="#ddd"/></svg>
<svg style="left:39px;top:466px" width="146" height="103" viewBox="9 21 146 103"><path d="M49.22 33.87L53.35 39.99M53.35 39.99L51.20 49.07M51.20 49.07L46.25 51.55M46.25 51.55L42.45 45.44M42.45 45.44L44.10 36.68M44.10 36.68L49.22 33.87M49.22 33.87L50.05 28.92M53.35 39.99L56.16 38.83M51.20 49.07L53.35 53.20M42.45 45.44L39.31 47.75M44.10 36.68L41.79 33.38M46.25 51.55L43.77 61.46M43.77 61.46L37.16 62.28M43.77 61.46L43.61 67.57M43.77 61.46L47.41 67.74M43.61 67.57L39.31 72.53M39.31 72.53L31.38 73.02M39.31 72.53L44.10 79.13M44.10 79.13L51.20 72.20M43.61 67.57L51.20 72.20M51.20 72.20L59.46 75.00M59.46 75.00L67.72 73.85M67.72 73.85L71.36 72.53M71.36 72.53L63.59 67.74M63.59 67.74L56.16 69.72M56.16 69.72L51.20 72.20M71.36 72.53L78.13 68.56M78.13 68.56L81.27 68.56M63.59 67.74L62.77 63.11M59.46 75.00L54.51 77.98M67.72 73.85L71.36 78.47M44.10 79.13L44.10 87.89M44.10 87.89L49.55 90.36M44.10 87.89L40.96 91.19M40.96 91.19L37.66 87.89M37.66 87.89L34.69 92.02M34.69 92.02L35.51 101.10M35.51 101.10L39.31 105.56M39.31 105.56L42.62 101.10M42.62 101.10L40.96 91.19M37.66 87.89L36.83 82.93M34.69 92.02L32.21 90.36M35.51 101.10L33.86 104.90M39.31 105.56L39.64 112.17M42.62 101.10L44.93 104.90" stroke="#d9b83a" stroke-width=".75" fill="none" stroke-linecap="round"/><circle cx="49.22" cy="33.87" r="1.25" fill="#e8e8e8"/><circle cx="53.35" cy="39.99" r="1.25" fill="#e8e8e8"/><circle cx="51.20" cy="49.07" r="1.25" fill="#e8e8e8"/><circle cx="46.25" cy="51.55" r="1.25" fill="#e8e8e8"/><circle cx="42.45" cy="45.44" r="1.25" fill="#e8e8e8"/><circle cx="44.10" cy="36.68" r="1.25" fill="#e8e8e8"/><circle cx="50.05" cy="28.92" r="0.75" fill="#fff"/><circle cx="56.16" cy="38.83" r="0.75" fill="#fff"/><circle cx="53.35" cy="53.20" r="0.75" fill="#fff"/><circle cx="39.31" cy="47.75" r="0.75" fill="#fff"/><circle cx="41.79" cy="33.38" r="0.75" fill="#fff"/><circle cx="43.77" cy="61.46" r="1.25" fill="#e8e8e8"/><circle cx="37.16" cy="62.28" r="0.75" fill="#fff"/><circle cx="43.61" cy="67.57" r="1.25" fill="#e8e8e8"/><circle cx="47.41" cy="67.74" r="1.45" fill="#f00000"/><circle cx="39.31" cy="72.53" r="1.25" fill="#e8e8e8"/><circle cx="31.38" cy="73.02" r="1.45" fill="#f00000"/><circle cx="44.10" cy="79.13" r="1.45" fill="#0000f0"/><circle cx="51.20" cy="72.20" r="1.25" fill="#e8e8e8"/><circle cx="59.46" cy="75.00" r="1.25" fill="#e8e8e8"/><circle cx="67.72" cy="73.85" r="1.25" fill="#e8e8e8"/><circle cx="71.36" cy="72.53" r="1.25" fill="#e8e8e8"/><circle cx="63.59" cy="67.74" r="1.25" fill="#e8e8e8"/><circle cx="56.16" cy="69.72" r="1.25" fill="#e8e8e8"/><circle cx="78.13" cy="68.56" r="1.45" fill="#f00000"/><circle cx="81.27" cy="68.56" r="0.75" fill="#fff"/><circle cx="62.77" cy="63.11" r="0.75" fill="#fff"/><circle cx="54.51" cy="77.98" r="0.75" fill="#fff"/><circle cx="71.36" cy="78.47" r="0.75" fill="#fff"/><circle cx="44.10" cy="87.89" r="1.25" fill="#e8e8e8"/><circle cx="49.55" cy="90.36" r="0.75" fill="#fff"/><circle cx="40.96" cy="91.19" r="1.25" fill="#e8e8e8"/><circle cx="37.66" cy="87.89" r="1.25" fill="#e8e8e8"/><circle cx="34.69" cy="92.02" r="1.25" fill="#e8e8e8"/><circle cx="35.51" cy="101.10" r="1.25" fill="#e8e8e8"/><circle cx="39.31" cy="105.56" r="1.25" fill="#e8e8e8"/><circle cx="42.62" cy="101.10" r="1.25" fill="#e8e8e8"/><circle cx="36.83" cy="82.93" r="0.75" fill="#fff"/><circle cx="32.21" cy="90.36" r="0.75" fill="#fff"/><circle cx="33.86" cy="104.90" r="0.75" fill="#fff"/><circle cx="39.64" cy="112.17" r="0.75" fill="#fff"/><circle cx="44.93" cy="104.90" r="0.75" fill="#fff"/><path d="M102.22 111.00L106.35 104.89M106.35 104.89L104.20 95.80M104.20 95.80L99.24 93.32M99.24 93.32L95.44 99.44M95.44 99.44L97.10 108.19M97.10 108.19L102.22 111.00M102.22 111.00L103.04 115.95M106.35 104.89L109.15 106.04M104.20 95.80L106.35 91.67M95.44 99.44L92.31 97.12M97.10 108.19L94.78 111.49M99.24 93.32L96.77 83.41M96.77 83.41L90.16 82.59M96.77 83.41L96.60 77.30M96.77 83.41L100.40 77.14M96.60 77.30L92.31 72.35M92.31 72.35L84.38 71.85M92.31 72.35L97.10 65.74M97.10 65.74L104.20 72.68M96.60 77.30L104.20 72.68M104.20 72.68L112.46 69.87M112.46 69.87L120.72 71.03M120.72 71.03L124.35 72.35M124.35 72.35L116.59 77.14M116.59 77.14L109.15 75.15M109.15 75.15L104.20 72.68M124.35 72.35L131.12 76.31M131.12 76.31L134.26 76.31M116.59 77.14L115.76 81.76M112.46 69.87L107.50 66.90M120.72 71.03L124.35 66.40M97.10 65.74L97.10 56.99M97.10 56.99L102.55 54.51M97.10 56.99L93.96 53.68M93.96 53.68L90.65 56.99M90.65 56.99L87.68 52.86M87.68 52.86L88.51 43.77M88.51 43.77L92.31 39.31M92.31 39.31L95.61 43.77M95.61 43.77L93.96 53.68M90.65 56.99L89.83 61.94M87.68 52.86L85.20 54.51M88.51 43.77L86.85 39.97M92.31 39.31L92.64 32.70M95.61 43.77L97.92 39.97" stroke="#d9b83a" stroke-width=".75" fill="none" stroke-linecap="round"/><circle cx="102.22" cy="111.00" r="1.25" fill="#e8e8e8"/><circle cx="106.35" cy="104.89" r="1.25" fill="#e8e8e8"/><circle cx="104.20" cy="95.80" r="1.25" fill="#e8e8e8"/><circle cx="99.24" cy="93.32" r="1.25" fill="#e8e8e8"/><circle cx="95.44" cy="99.44" r="1.25" fill="#e8e8e8"/><circle cx="97.10" cy="108.19" r="1.25" fill="#e8e8e8"/><circle cx="103.04" cy="115.95" r="0.75" fill="#fff"/><circle cx="109.15" cy="106.04" r="0.75" fill="#fff"/><circle cx="106.35" cy="91.67" r="0.75" fill="#fff"/><circle cx="92.31" cy="97.12" r="0.75" fill="#fff"/><circle cx="94.78" cy="111.49" r="0.75" fill="#fff"/><circle cx="96.77" cy="83.41" r="1.25" fill="#e8e8e8"/><circle cx="90.16" cy="82.59" r="0.75" fill="#fff"/><circle cx="96.60" cy="77.30" r="1.25" fill="#e8e8e8"/><circle cx="100.40" cy="77.14" r="1.45" fill="#f00000"/><circle cx="92.31" cy="72.35" r="1.25" fill="#e8e8e8"/><circle cx="84.38" cy="71.85" r="1.45" fill="#f00000"/><circle cx="97.10" cy="65.74" r="1.45" fill="#0000f0"/><circle cx="104.20" cy="72.68" r="1.25" fill="#e8e8e8"/><circle cx="112.46" cy="69.87" r="1.25" fill="#e8e8e8"/><circle cx="120.72" cy="71.03" r="1.25" fill="#e8e8e8"/><circle cx="124.35" cy="72.35" r="1.25" fill="#e8e8e8"/><circle cx="116.59" cy="77.14" r="1.25" fill="#e8e8e8"/><circle cx="109.15" cy="75.15" r="1.25" fill="#e8e8e8"/><circle cx="131.12" cy="76.31" r="1.45" fill="#f00000"/><circle cx="134.26" cy="76.31" r="0.75" fill="#fff"/><circle cx="115.76" cy="81.76" r="0.75" fill="#fff"/><circle cx="107.50" cy="66.90" r="0.75" fill="#fff"/><circle cx="124.35" cy="66.40" r="0.75" fill="#fff"/><circle cx="97.10" cy="56.99" r="1.25" fill="#e8e8e8"/><circle cx="102.55" cy="54.51" r="0.75" fill="#fff"/><circle cx="93.96" cy="53.68" r="1.25" fill="#e8e8e8"/><circle cx="90.65" cy="56.99" r="1.25" fill="#e8e8e8"/><circle cx="87.68" cy="52.86" r="1.25" fill="#e8e8e8"/><circle cx="88.51" cy="43.77" r="1.25" fill="#e8e8e8"/><circle cx="92.31" cy="39.31" r="1.25" fill="#e8e8e8"/><circle cx="95.61" cy="43.77" r="1.25" fill="#e8e8e8"/><circle cx="89.83" cy="61.94" r="0.75" fill="#fff"/><circle cx="85.20" cy="54.51" r="0.75" fill="#fff"/><circle cx="86.85" cy="39.97" r="0.75" fill="#fff"/><circle cx="92.64" cy="32.70" r="0.75" fill="#fff"/><circle cx="97.92" cy="39.97" r="0.75" fill="#fff"/><circle cx="11.4" cy="23.2" r="1.5" fill="#0000f0"/><circle cx="11.4" cy="27" r="1.5" fill="#f00000"/><circle cx="11.6" cy="30.3" r="1.3" fill="#fff"/><circle cx="11.6" cy="33.3" r="1.3" fill="#e0e0e0"/><rect x="18" y="22" width=".8" height="1.2" fill="#ddd"/><rect x="18" y="25" width=".8" height="1.6" fill="#ddd"/></svg>
<svg style="left:39px;top:636px" width="146" height="103" viewBox="9 21 146 103"><rect x="56.96" y="36.78" width="50.48" height="71.04" fill="none" stroke="#d6d6d6" stroke-width=".9"/><g transform="translate(82.2 72.3) scale(0.158) translate(-578.25 -466.2)"><use href="#bp" stroke="#d2b23c" stroke-width="3.9"/><use href="#at"/></g><circle cx="11.4" cy="23.2" r="1.5" fill="#0000f0"/><circle cx="11.4" cy="27" r="1.5" fill="#f00000"/><circle cx="11.6" cy="30.3" r="1.3" fill="#fff"/><circle cx="11.6" cy="33.3" r="1.3" fill="#e0e0e0"/><rect x="18" y="22" width=".8" height="1.2" fill="#ddd"/><rect x="18" y="25" width=".8" height="1.6" fill="#ddd"/></svg>
<svg style="left:8.7px;top:8.5px" width="17" height="13" viewBox="0 0 17 13"><path d="M2.8 .5H13.4L16 4L8.2 12.4L.2 4Z" fill="#7e92f8"/><path d="M2.8 .5L5 4H.2ZM13.4 .5L11.2 4H16ZM5 4H11.2L8.2 12.4Z" fill="#b4c2ff"/><path d="M5 4L8.2 .5L11.2 4Z" fill="#3e5cf0"/><path d="M6.6 4L8.2 1.8L9.6 4L8.2 9.6Z" fill="#eef2ff"/><path d="M.2 4L5 4L8.2 12.4ZM16 4H11.2L8.2 12.4Z" fill="#5a78f6" opacity=".55"/></svg>
<svg style="left:1301px;top:9px" width="11" height="12" viewBox="0 0 11 12"><path d="M0.5 6.5H10.5" stroke="#111" stroke-width="1"/></svg>
<svg style="left:1346px;top:9px" width="12" height="13" viewBox="0 0 12 13"><rect x=".5" y="1.5" width="10" height="10" fill="none" stroke="#111" stroke-width="1"/></svg>
<svg style="left:1392px;top:9px" width="12" height="13" viewBox="0 0 12 13"><path d="M0.7 1.2L10.8 11.3M10.8 1.2L0.7 11.3" stroke="#111" stroke-width="1.1"/></svg>
<svg style="left:1373px;top:37px" width="8" height="12" viewBox="0 0 8 12"><rect x="1" y="9" width="6" height="2" fill="#111"/></svg>
<svg style="left:1388px;top:37px" width="11" height="12" viewBox="0 0 11 12"><path d="M3.5 1H9.5V7H7.5M1 4H7V10H1Z" fill="none" stroke="#111" stroke-width="1.2"/><rect x="1" y="3.4" width="6" height="1.6" fill="#111"/><rect x="3.5" y=".4" width="6" height="1.6" fill="#111"/></svg>
<svg style="left:1405px;top:37px" width="9" height="12" viewBox="0 0 9 12"><path d="M1 2.5L8 9.5M8 2.5L1 9.5" stroke="#111" stroke-width="2"/></svg>
<svg style="left:11px;top:36px" width="6" height="18" viewBox="0 0 6 18"><rect x="0.6" y="0.6" width="1" height="1" fill="#f4f6fb"/><rect x="0" y="0" width="1" height="1" fill="#5c6a8c"/><rect x="4.6" y="0.6" width="1" height="1" fill="#f4f6fb"/><rect x="4" y="0" width="1" height="1" fill="#5c6a8c"/><rect x="2.6" y="2.6" width="1" height="1" fill="#f4f6fb"/><rect x="2" y="2" width="1" height="1" fill="#5c6a8c"/><rect x="0.6" y="4.6" width="1" height="1" fill="#f4f6fb"/><rect x="0" y="4" width="1" height="1" fill="#5c6a8c"/><rect x="4.6" y="4.6" width="1" height="1" fill="#f4f6fb"/><rect x="4" y="4" width="1" height="1" fill="#5c6a8c"/><rect x="2.6" y="6.6" width="1" height="1" fill="#f4f6fb"/><rect x="2" y="6" width="1" height="1" fill="#5c6a8c"/><rect x="0.6" y="8.6" width="1" height="1" fill="#f4f6fb"/><rect x="0" y="8" width="1" height="1" fill="#5c6a8c"/><rect x="4.6" y="8.6" width="1" height="1" fill="#f4f6fb"/><rect x="4" y="8" width="1" height="1" fill="#5c6a8c"/><rect x="2.6" y="10.6" width="1" height="1" fill="#f4f6fb"/><rect x="2" y="10" width="1" height="1" fill="#5c6a8c"/><rect x="0.6" y="12.6" width="1" height="1" fill="#f4f6fb"/><rect x="0" y="12" width="1" height="1" fill="#5c6a8c"/><rect x="4.6" y="12.6" width="1" height="1" fill="#f4f6fb"/><rect x="4" y="12" width="1" height="1" fill="#5c6a8c"/><rect x="2.6" y="14.6" width="1" height="1" fill="#f4f6fb"/><rect x="2" y="14" width="1" height="1" fill="#5c6a8c"/><rect x="0.6" y="16.6" width="1" height="1" fill="#f4f6fb"/><rect x="0" y="16" width="1" height="1" fill="#5c6a8c"/><rect x="4.6" y="16.6" width="1" height="1" fill="#f4f6fb"/><rect x="4" y="16" width="1" height="1" fill="#5c6a8c"/></svg>
<svg style="left:24px;top:35px" width="16" height="16" viewBox="0 0 16 16"><path d="M1.5 .5H9L12.5 4V14H1.5Z" fill="#fff"/><path d="M1.5 14V.5H9" fill="none" stroke="#7a7a7a" stroke-width="1"/><path d="M9 .5L12.5 4V14H1.5" fill="none" stroke="#111" stroke-width="1.2"/><path d="M9 .5V4H12.5" fill="none" stroke="#111" stroke-width="1"/><path d="M4.6 6H13L15.6 8.8L8.8 15.6L2 8.8Z" fill="#6f86f6"/><path d="M4.6 6L6.4 8.8H2ZM13 6L11.2 8.8H15.6ZM6.4 8.8H11.2L8.8 15.6Z" fill="#a9b8ff"/><path d="M6.4 8.8L8.8 6L11.2 8.8Z" fill="#3c56e8"/><path d="M7.4 8.8L8.8 7L10.2 8.8L8.8 13Z" fill="#f2f5ff"/></svg>
<div style="left:48.4px;top:49.3px;width:5.8px;height:1px;background:#1b1b1b;"></div>
<div style="left:84.2px;top:49.3px;width:6.6px;height:1px;background:#1b1b1b;"></div>
<div style="left:122.2px;top:49.3px;width:7.2px;height:1px;background:#1b1b1b;"></div>
<div style="left:165.4px;top:49.3px;width:7px;height:1px;background:#1b1b1b;"></div>
<div style="left:231.2px;top:49.3px;width:6.6px;height:1px;background:#1b1b1b;"></div>
<div style="left:286.3px;top:49.3px;width:7.8px;height:1px;background:#1b1b1b;"></div>
<div style="left:342.4px;top:49.3px;width:6.8px;height:1px;background:#1b1b1b;"></div>
<div style="left:387.4px;top:49.3px;width:8.4px;height:1px;background:#1b1b1b;"></div>
<div style="left:445.5px;top:49.3px;width:9.4px;height:1px;background:#1b1b1b;"></div>
<div style="left:493.2px;top:49.3px;width:6.2px;height:1px;background:#1b1b1b;"></div>
<div style="left:539.5px;top:49.3px;width:10.4px;height:1px;background:#1b1b1b;"></div>
<div style="left:601.6px;top:49.3px;width:7.8px;height:1px;background:#1b1b1b;"></div>
<svg style="left:11px;top:61px" width="6" height="18" viewBox="0 0 6 18"><rect x="0.6" y="0.6" width="1" height="1" fill="#f4f6fb"/><rect x="0" y="0" width="1" height="1" fill="#5c6a8c"/><rect x="4.6" y="0.6" width="1" height="1" fill="#f4f6fb"/><rect x="4" y="0" width="1" height="1" fill="#5c6a8c"/><rect x="2.6" y="2.6" width="1" height="1" fill="#f4f6fb"/><rect x="2" y="2" width="1" height="1" fill="#5c6a8c"/><rect x="0.6" y="4.6" width="1" height="1" fill="#f4f6fb"/><rect x="0" y="4" width="1" height="1" fill="#5c6a8c"/><rect x="4.6" y="4.6" width="1" height="1" fill="#f4f6fb"/><rect x="4" y="4" width="1" height="1" fill="#5c6a8c"/><rect x="2.6" y="6.6" width="1" height="1" fill="#f4f6fb"/><rect x="2" y="6" width="1" height="1" fill="#5c6a8c"/><rect x="0.6" y="8.6" width="1" height="1" fill="#f4f6fb"/><rect x="0" y="8" width="1" height="1" fill="#5c6a8c"/><rect x="4.6" y="8.6" width="1" height="1" fill="#f4f6fb"/><rect x="4" y="8" width="1" height="1" fill="#5c6a8c"/><rect x="2.6" y="10.6" width="1" height="1" fill="#f4f6fb"/><rect x="2" y="10" width="1" height="1" fill="#5c6a8c"/><rect x="0.6" y="12.6" width="1" height="1" fill="#f4f6fb"/><rect x="0" y="12" width="1" height="1" fill="#5c6a8c"/><rect x="4.6" y="12.6" width="1" height="1" fill="#f4f6fb"/><rect x="4" y="12" width="1" height="1" fill="#5c6a8c"/><rect x="2.6" y="14.6" width="1" height="1" fill="#f4f6fb"/><rect x="2" y="14" width="1" height="1" fill="#5c6a8c"/><rect x="0.6" y="16.6" width="1" height="1" fill="#f4f6fb"/><rect x="0" y="16" width="1" height="1" fill="#5c6a8c"/><rect x="4.6" y="16.6" width="1" height="1" fill="#f4f6fb"/><rect x="4" y="16" width="1" height="1" fill="#5c6a8c"/></svg>
<svg style="left:26px;top:61px" width="16" height="16" viewBox="0 0 16 16"><rect x="3.75" y="4.75" width="8.5" height="9.5" fill="#fff" stroke="#111" stroke-width="1.5"/><circle cx="3.5" cy="3.5" r="2.6" fill="#dfe3ee"/><path d="M3.5 0V7M0 3.5H7M1 1L6 6M6 1L1 6" stroke="#e0601a" stroke-width="1"/><rect x="2.9" y="2.9" width="1.2" height="1.2" fill="#fff"/></svg>
<svg style="left:48px;top:61px" width="16" height="16" viewBox="0 0 16 16"><path d="M.8 14.2V4.6H4.6L6 6H11.2V8" fill="#f7e08e" stroke="#9a7a24" stroke-width="1"/><path d="M.8 14.2L3.6 8H15.4L12.4 14.2Z" fill="#f6c44e" stroke="#9a7a24" stroke-width="1"/><path d="M8.8 3.6Q11.6 .4 14.6 3" fill="none" stroke="#2a5ad8" stroke-width="1.3"/><path d="M15.6 1.2V4.6H12.4Z" fill="#2a5ad8"/></svg>
<svg style="left:70.5px;top:61px" width="16" height="16" viewBox="0 0 16 16"><rect x="1" y="1.5" width="13.6" height="13" fill="#5a5ad2" stroke="#b8a878" stroke-width="1"/><rect x="3.8" y="2" width="8" height="5.6" fill="#fff"/><rect x="4.2" y="10.2" width="7.4" height="4" fill="#c8c8c8"/><rect x="5.4" y="11.2" width="2.2" height="2.4" fill="#5a5ad2"/></svg>
<svg style="left:92px;top:61px" width="16" height="16" viewBox="0 0 16 16"><path d="M3 1.2H6V4.4L7.4 8V14.6H1V8L3 4.4Z" fill="#3a66d8"/><path d="M10 1.2H13V4.4L15 8V14.6H8.6V8L10 4.4Z" fill="#3a66d8"/><rect x="1.6" y="10.4" width="5.2" height="3.8" fill="#e8efff"/><rect x="9.2" y="10.4" width="5.2" height="3.8" fill="#e8efff"/><rect x="3.4" y="1.6" width="1.2" height="2.4" fill="#cfe0ff"/><rect x="10.4" y="1.6" width="1.2" height="2.4" fill="#cfe0ff"/></svg>
<svg style="left:114.5px;top:61px" width="16" height="16" viewBox="0 0 16 16"><path d="M1 1.2H7.6L10.4 4V14.4H1Z" fill="#fff" stroke="#111" stroke-width="1.5"/><circle cx="8.6" cy="8.2" r="3.5" fill="#e4e8ee" stroke="#8a8a8a" stroke-width="1.2"/><path d="M11.2 11L14.6 14.6" stroke="#e08a28" stroke-width="2.2"/></svg>
<svg style="left:136px;top:61px" width="16" height="16" viewBox="0 0 16 16"><rect x="3.6" y="1.4" width="8.8" height="5" fill="#fff" stroke="#222" stroke-width="1.1"/><rect x=".8" y="6" width="14.4" height="5.2" fill="#d2ca86" stroke="#222" stroke-width="1.1"/><rect x="3.6" y="10" width="8.8" height="4.6" fill="#fff" stroke="#222" stroke-width="1.1"/><rect x="2.4" y="7.4" width="2.4" height="1.2" fill="#f8f060"/></svg>
<div style="left:157px;top:60px;width:1px;height:20px;background:#8990A6;"></div>
<svg style="left:165px;top:61px" width="14" height="16" viewBox="0 0 14 16"><path d="M3.4 1L8.6 10.6M10.6 1L5.4 10.6" stroke="#6c6c6c" stroke-width="1.4"/><circle cx="3.6" cy="12.6" r="2.1" fill="none" stroke="#6c6c6c" stroke-width="1.2"/><circle cx="10.4" cy="12.6" r="2.1" fill="none" stroke="#6c6c6c" stroke-width="1.2"/></svg>
<svg style="left:185.5px;top:61px" width="16" height="16" viewBox="0 0 16 16"><path d="M1 1.4H9.6V9.8H1Z" fill="#fff" stroke="#111" stroke-width="1.6"/><path d="M6 6.2H14.8V14.6H6Z" fill="#fff" stroke="#111" stroke-width="1.6"/></svg>
<svg style="left:208px;top:61px" width="16" height="16" viewBox="0 0 16 16"><rect x="1" y="2.8" width="11" height="11.4" fill="#d8d8d8" stroke="#333" stroke-width="1.4"/><rect x="4" y="1" width="5" height="3" fill="#999" stroke="#333" stroke-width="1"/><path d="M6.4 7H15V14.8H6.4Z" fill="#fff" stroke="#111" stroke-width="1.6"/></svg>
<div style="left:229px;top:60px;width:1px;height:20px;background:#8990A6;"></div>
<svg style="left:237.5px;top:61px" width="14" height="16" viewBox="0 0 14 16"><path d="M2.6 5.4Q4 2 7.6 2Q12.4 2.4 12 6.4Q11.4 9.6 4.8 14.2" fill="none" stroke="#1038f0" stroke-width="2.5"/><path d="M.3 1.4V7.4H6.3Z" fill="#1038f0"/></svg>
<svg style="left:258.4px;top:67.6px" width="6" height="4" viewBox="0 0 6 4"><path d="M0 0H5.4L2.7 3Z" fill="#1a1a1a"/></svg>
<svg style="left:270.5px;top:61px" width="14" height="16" viewBox="0 0 14 16"><path d="M11.4 5.4Q10 2 6.4 2Q1.6 2.4 2 6.4Q2.6 9.6 9.2 14.2" fill="none" stroke="#5a5a5a" stroke-width="2.4"/><path d="M13.7 1.4V7.4H7.7Z" fill="#5a5a5a"/></svg>
<svg style="left:291.3px;top:67.6px" width="6" height="4" viewBox="0 0 6 4"><path d="M0 0H5.4L2.7 3Z" fill="#9a9a9a"/></svg>
<div style="left:301px;top:60px;width:1px;height:20px;background:#8990A6;"></div>
<svg style="left:309px;top:61px" width="14" height="16" viewBox="0 0 14 16"><path d="M4 9V3.6Q4.9 2.2 5.8 3.6V2.6Q6.9 .8 8 2.6V3Q9.1 1.4 10.2 3V4.6Q11.4 3.2 12.6 4.8V9.6Q12.6 13 10.4 14.6H6Q4 13.6 .8 9.2Q.4 7.6 1.8 7.6Q3 8 4 9.6Z" fill="#fff" stroke="#111" stroke-width="1"/><path d="M5.9 3.8V7.6M8.1 3.2V7.6M10.3 4.8V7.8" stroke="#111" stroke-width=".8"/></svg>
<svg style="left:331.5px;top:61px" width="11" height="16" viewBox="0 0 11 16"><path d="M.9 1V11.6L3.3 9.5L5.4 14.4L7.6 13.5L5.6 8.8H8.8Z" fill="#fff" stroke="#111" stroke-width=".9"/></svg>
<svg style="left:351.8px;top:67.6px" width="6" height="4" viewBox="0 0 6 4"><path d="M0 0H5.4L2.7 3Z" fill="#1a1a1a"/></svg>
<div style="left:362px;top:60px;width:1px;height:20px;background:#8990A6;"></div>
<svg style="left:369px;top:61px" width="16" height="16" viewBox="0 0 16 16"><rect x=".5" y=".6" width="15" height="14" fill="#fff" stroke="#1c2466" stroke-width="1"/><rect x="1" y="1.1" width="14" height="1.7" fill="#4a7ce4"/><path d="M4.4 4.6V12.2H8M4.4 6.4H8M4.4 9.2H8" fill="none" stroke="#b4a85a" stroke-width="1"/><path d="M3.2 4.6H4.8M8 6.4H11.6M8 9.2H11.6M8 12.2H11.6" stroke="#3a3a3a" stroke-width="1.1"/></svg>
<svg style="left:391px;top:61px" width="16" height="16" viewBox="0 0 16 16"><rect x=".5" y=".6" width="15" height="14" fill="#fff" stroke="#1c2466" stroke-width="1"/><rect x="1" y="1.1" width="14" height="1.7" fill="#4a7ce4"/><circle cx="8.6" cy="9" r="4.6" fill="#e4e4e4" stroke="#8c8c8c" stroke-width="1.1"/><path d="M8.6 6V9.2H11" fill="none" stroke="#666" stroke-width="1"/><path d="M2.2 7.6Q4 3.4 8 4" fill="none" stroke="#28b428" stroke-width="1.6"/><path d="M1.2 5.2L2 9L5.2 7.4Z" fill="#28b428"/></svg>
<svg style="left:413px;top:61px" width="16" height="16" viewBox="0 0 16 16"><rect x=".5" y=".6" width="15" height="14" fill="#fff" stroke="#1c2466" stroke-width="1"/><rect x="1" y="1.1" width="14" height="1.7" fill="#4a7ce4"/><path d="M5.4 7.6Q8.6 3.8 11.4 6.6Q13 9.8 9.4 12.8" fill="none" stroke="#0c2cf0" stroke-width="2.9"/><path d="M2.2 8L7.4 4V11.4Z" fill="#0c2cf0"/></svg>
<svg style="left:435px;top:61px" width="16" height="16" viewBox="0 0 16 16"><rect x=".5" y=".6" width="15" height="14" fill="#fff" stroke="#1c2466" stroke-width="1"/><rect x="1" y="1.1" width="14" height="1.7" fill="#4a7ce4"/><path d="M4 8.2Q4.4 4.8 8 4.8H10.4M12 9.4Q11.6 12.6 8 12.6H5.6" fill="none" stroke="#d69a2c" stroke-width="2.2"/><path d="M9.4 2.4L13.2 4.8L9.4 7.2ZM6.6 10.2L2.8 12.6L6.6 15Z" fill="#d69a2c"/></svg>
<div style="left:456px;top:60px;width:1px;height:20px;background:#8990A6;"></div>
<svg style="left:463px;top:61px" width="16" height="16" viewBox="0 0 16 16"><rect x=".6" y="1" width="13.4" height="10.6" fill="#f4f6ff" stroke="#3a4ac0" stroke-width="1"/><rect x=".2" y=".4" width="14.2" height="2.2" fill="#3a4ac0"/><path d="M2.4 4.6H8M2.4 6.8H6" stroke="#8a94c8" stroke-width="1"/><rect x="1.4" y="1" width="1.6" height="1.2" fill="#f0d040"/><rect x="5.2" y="7.4" width="3.2" height="2.5" fill="#f8c820" stroke="#c08a10" stroke-width=".5"/><rect x="5.2" y="10.3" width="3.2" height="2.5" fill="#f8c820" stroke="#c08a10" stroke-width=".5"/><rect x="5.2" y="13.2" width="3.2" height="2.5" fill="#f8c820" stroke="#c08a10" stroke-width=".5"/><rect x="8.8" y="7.4" width="3.2" height="2.5" fill="#f8c820" stroke="#c08a10" stroke-width=".5"/><rect x="8.8" y="10.3" width="3.2" height="2.5" fill="#f8c820" stroke="#c08a10" stroke-width=".5"/><rect x="8.8" y="13.2" width="3.2" height="2.5" fill="#f8c820" stroke="#c08a10" stroke-width=".5"/><rect x="12.4" y="7.4" width="3.2" height="2.5" fill="#f8c820" stroke="#c08a10" stroke-width=".5"/><rect x="12.4" y="10.3" width="3.2" height="2.5" fill="#f8c820" stroke="#c08a10" stroke-width=".5"/><rect x="12.4" y="13.2" width="3.2" height="2.5" fill="#f8c820" stroke="#c08a10" stroke-width=".5"/></svg>
<svg style="left:485px;top:61px" width="16" height="16" viewBox="0 0 16 16"><rect x="1" y="1" width="12.6" height="10.2" fill="#eceef4" stroke="#a8aab4" stroke-width="1"/><rect x=".6" y=".5" width="13.4" height="2" fill="#b4b6c0"/><path d="M3 4.8H9M3 7H8" stroke="#b4b6c0" stroke-width="1"/><path d="M10.2 15.4V10.6H7.8L11.6 6.4L15.4 10.6H13V15.4Z" fill="#d4d6dc" stroke="#b0b2bc" stroke-width=".7"/></svg>
<svg style="left:507px;top:61px" width="16" height="16" viewBox="0 0 16 16"><rect x="1" y="1" width="12.6" height="10.2" fill="#eceef4" stroke="#a8aab4" stroke-width="1"/><rect x=".6" y=".5" width="13.4" height="2" fill="#b4b6c0"/><path d="M3 4.8H9M3 7H8" stroke="#b4b6c0" stroke-width="1"/><path d="M10.2 6.6V11.2H7.8L11.6 15.6L15.4 11.2H13V6.6Z" fill="#d4d6dc" stroke="#b0b2bc" stroke-width=".7"/></svg>
<div style="left:528px;top:60px;width:1px;height:20px;background:#8990A6;"></div>
<svg style="left:535.5px;top:61px" width="15" height="16" viewBox="0 0 15 16"><rect x="0.8" y="2.2" width="3.6" height="2.6" fill="none" stroke="#111" stroke-width=".95"/><rect x="0.8" y="6.4" width="3.6" height="2.6" fill="none" stroke="#111" stroke-width=".95"/><rect x="0.8" y="10.600000000000001" width="3.6" height="2.6" fill="none" stroke="#111" stroke-width=".95"/><rect x="5.8" y="2.2" width="3.6" height="2.6" fill="none" stroke="#111" stroke-width=".95"/><rect x="5.8" y="6.4" width="3.6" height="2.6" fill="none" stroke="#111" stroke-width=".95"/><rect x="5.8" y="10.600000000000001" width="3.6" height="2.6" fill="none" stroke="#111" stroke-width=".95"/><rect x="10.8" y="2.2" width="3.6" height="2.6" fill="none" stroke="#111" stroke-width=".95"/><rect x="10.8" y="6.4" width="3.6" height="2.6" fill="none" stroke="#111" stroke-width=".95"/><rect x="10.8" y="10.600000000000001" width="3.6" height="2.6" fill="none" stroke="#111" stroke-width=".95"/></svg>
<svg style="left:557.2px;top:67.6px" width="6" height="4" viewBox="0 0 6 4"><path d="M0 0H5.4L2.7 3Z" fill="#1a1a1a"/></svg>
<svg style="left:568px;top:61px" width="16" height="16" viewBox="0 0 16 16"><path d="M1 4V1H6.6L7.6 3.6H15.4V14.8H1Z" fill="#9a9a9a" stroke="#7a7a7a" stroke-width="1"/><path d="M1.6 1.6H6.2L7 3.8H1.6Z" fill="#8cbcf4"/><rect x="1.6" y="4.4" width="13.2" height="8.2" fill="#050505"/><path d="M8.2 8L10.4 5.2L12.6 8M8.2 9L10.4 11.8L12.6 9" fill="none" stroke="#f01010" stroke-width="1"/><rect x="1.6" y="12.8" width="13.2" height="1.4" fill="#d4d4d4"/></svg>
<svg style="left:590px;top:61px" width="16" height="16" viewBox="0 0 16 16"><rect x="3.6" y="3" width="12" height="11.6" fill="#fff" stroke="#2a3aa8" stroke-width="1"/><rect x="3.2" y="2.4" width="12.8" height="2.2" fill="#3a5ad0"/><path d="M3.4 .2V7M0 3.6H6.8M1 1.2L5.8 6M5.8 1.2L1 6" stroke="#f0d020" stroke-width="1.3"/><rect x="1.6" y="1.8" width="3.6" height="3.6" fill="#fff8b0"/></svg>
<svg style="left:612px;top:61px" width="16" height="16" viewBox="0 0 16 16"><rect x=".6" y="1.4" width="10" height="8.4" fill="#a8c8f8" stroke="#5a8ae0" stroke-width="1"/><rect x="5" y="6" width="10.4" height="8.6" fill="#fff" stroke="#111" stroke-width="1.1"/><rect x="4.5" y="5.4" width="11.4" height="2.2" fill="#2a4ad0"/><path d="M6.6 13.2L8.6 9.6L10.4 11.4L11.8 9.8L13.8 13.2Z" fill="#f08a18"/><rect x="7.2" y="12.0" width="6.0" height="1.4" fill="#e05a10"/></svg>
<svg style="left:634px;top:61px" width="16" height="16" viewBox="0 0 16 16"><rect x="6" y="7" width="9.4" height="8" fill="#c4c4c4" stroke="#6a6a6a" stroke-width="1"/><rect x="1" y="2" width="9.6" height="7.8" fill="#fff" stroke="#111" stroke-width="1.1"/><rect x="0.5" y="1.4" width="10.6" height="2.2" fill="#2a4ad0"/><path d="M2.6 8.4L4.6 5.6L6.4 7.4L7.8 5.8L9.0 8.4Z" fill="#f08a18"/><rect x="3.2" y="7.200000000000001" width="5.199999999999999" height="1.4" fill="#e05a10"/><path d="M10.6 2.4Q13 .2 15 3" fill="none" stroke="#2a3ad8" stroke-width="1.2"/><path d="M15.8 1.2V4.8H12.6Z" fill="#2a3ad8"/></svg>
<svg style="left:656px;top:61px" width="16" height="16" viewBox="0 0 16 16"><rect x=".8" y="1.6" width="9.6" height="8" fill="#dcdcdc" stroke="#8a8a8a" stroke-width="1"/><rect x=".8" y="1.2" width="9.6" height="1.6" fill="#a8a8a8"/><rect x="5" y="6" width="10.4" height="8.6" fill="#fff" stroke="#111" stroke-width="1.1"/><rect x="4.5" y="5.4" width="11.4" height="2.2" fill="#2a4ad0"/><path d="M6.6 13.2L8.6 9.6L10.4 11.4L11.8 9.8L13.8 13.2Z" fill="#f08a18"/><rect x="7.2" y="12.0" width="6.0" height="1.4" fill="#e05a10"/></svg>
<svg style="left:678px;top:61px" width="16" height="16" viewBox="0 0 16 16"><rect x="0.6" y="0.6" width="3" height="2.6" fill="#e8d8a0" stroke="#9a8a50" stroke-width=".5"/><rect x="0.6" y="3.6" width="3" height="2.6" fill="#e8d8a0" stroke="#9a8a50" stroke-width=".5"/><rect x="4.0" y="0.6" width="3" height="2.6" fill="#e8d8a0" stroke="#9a8a50" stroke-width=".5"/><rect x="4.0" y="3.6" width="3" height="2.6" fill="#e8d8a0" stroke="#9a8a50" stroke-width=".5"/><rect x="7.3999999999999995" y="0.6" width="3" height="2.6" fill="#e8d8a0" stroke="#9a8a50" stroke-width=".5"/><rect x="7.3999999999999995" y="3.6" width="3" height="2.6" fill="#e8d8a0" stroke="#9a8a50" stroke-width=".5"/><rect x="3.6" y="3.6" width="11.4" height="6" fill="#f4c21c"/><rect x="5.0" y="5.2" width="1.8" height="1.6" fill="#e8dca8"/><rect x="8.2" y="5.2" width="1.8" height="1.6" fill="#e8dca8"/><rect x="11.4" y="5.2" width="1.8" height="1.6" fill="#e8dca8"/><rect x="6.4" y="8.6" width="9" height="6.4" fill="#fff" stroke="#111" stroke-width="1.1"/><rect x="5.9" y="8.0" width="10" height="2.2" fill="#2a4ad0"/><path d="M8.0 13.6L10.0 12.2L11.8 14.0L13.2 12.399999999999999L13.8 13.6Z" fill="#f08a18"/><rect x="8.600000000000001" y="12.4" width="4.6" height="1.4" fill="#e05a10"/></svg>
<svg style="left:700px;top:61px" width="16" height="16" viewBox="0 0 16 16"><circle cx="8.6" cy="8.6" r="5.4" fill="#e6e8ee" stroke="#8e929c" stroke-width="1.2"/><path d="M8.6 5V8.8H11.6" fill="none" stroke="#6a6e78" stroke-width="1"/><path d="M1.6 7Q3.4 1.6 9 2" fill="none" stroke="#28b428" stroke-width="2"/><path d="M.2 4.4L1.2 9.4L5 7.2Z" fill="#28b428"/></svg>
<svg style="left:722.3px;top:67.6px" width="6" height="4" viewBox="0 0 6 4"><path d="M0 0H5.4L2.7 3Z" fill="#1a1a1a"/></svg>
<svg style="left:733px;top:61px" width="16" height="16" viewBox="0 0 16 16"><rect x="4.8" y="1" width="10.6" height="8.6" fill="#e4e4e8" stroke="#8c8c92" stroke-width="1"/><rect x="4.8" y=".6" width="10.6" height="1.8" fill="#9a9aa2"/><rect x="7.6" y="4" width="5" height="3.6" fill="#b8b8be"/><path d="M.8 11L5.4 7V9.4H10V12.6H5.4V15Z" fill="#e8e8ec" stroke="#7c7c84" stroke-width="1"/></svg>
<svg style="left:755px;top:61px" width="16" height="16" viewBox="0 0 16 16"><rect x="0.6" y="1" width="10.6" height="8.6" fill="#e4e4e8" stroke="#8c8c92" stroke-width="1"/><rect x="0.6" y=".6" width="10.6" height="1.8" fill="#9a9aa2"/><rect x="3.4" y="4" width="5" height="3.6" fill="#b8b8be"/><path d="M15.4 11L10.8 7V9.4H6.2V12.6H10.8V15Z" fill="#e8e8ec" stroke="#7c7c84" stroke-width="1"/></svg>
<svg style="left:777.3px;top:67.6px" width="6" height="4" viewBox="0 0 6 4"><path d="M0 0H5.4L2.7 3Z" fill="#9a9a9a"/></svg>
<div style="left:787px;top:60px;width:1px;height:20px;background:#8990A6;"></div>
<svg style="left:794px;top:61px" width="16" height="16" viewBox="0 0 16 16"><rect x=".5" y=".6" width="15" height="14" fill="#fff" stroke="#1c2466" stroke-width="1"/><rect x="1" y="1.1" width="14" height="1.7" fill="#4a7ce4"/><path d="M3 5.5H13M3 7.5H13M3 9.5H13M3 11.5H13" stroke="#333" stroke-width=".8"/></svg>
<svg style="left:816px;top:61px" width="16" height="16" viewBox="0 0 16 16"><rect x=".5" y=".6" width="15" height="14" fill="#fff" stroke="#1c2466" stroke-width="1"/><rect x="1" y="1.1" width="14" height="1.7" fill="#4a7ce4"/><circle cx="4.6" cy="6.4" r="1.9" fill="#f01010"/><circle cx="4.6" cy="11.2" r="1.9" fill="#1030f0"/><path d="M8 6.4H13M8 11.2H13" stroke="#555" stroke-width="1.3"/></svg>
<svg style="left:838px;top:61px" width="16" height="16" viewBox="0 0 16 16"><rect x=".5" y=".6" width="15" height="14" fill="#f4f4f4" stroke="#8a8a9a" stroke-width="1"/><rect x="1" y="1.1" width="14" height="1.7" fill="#3a5ad0"/><path d="M1 5.6H15M1 8.6H15M1 11.6H15M4.6 3V14.4M8.2 3V14.4M11.8 3V14.4" stroke="#9a9a9a" stroke-width="1"/></svg>
<svg style="left:859.6px;top:67.6px" width="6" height="4" viewBox="0 0 6 4"><path d="M0 0H5.4L2.7 3Z" fill="#1a1a1a"/></svg>
<svg style="left:871px;top:61px" width="16" height="16" viewBox="0 0 16 16"><rect x=".5" y=".6" width="15" height="14" fill="#fff" stroke="#1c2466" stroke-width="1"/><rect x="1" y="1.1" width="14" height="1.7" fill="#4a7ce4"/><path d="M4 12L8.4 5L11 12Z" fill="none" stroke="#111" stroke-width="1"/></svg>
<svg style="left:893px;top:61px" width="16" height="16" viewBox="0 0 16 16"><rect x=".5" y=".6" width="15" height="14" fill="#fff" stroke="#1c2466" stroke-width="1"/><rect x="1" y="1.1" width="14" height="1.7" fill="#4a7ce4"/><path d="M2 12.6H14M4 12.6V8M6.4 12.6V5M8.8 12.6V9M11 12.6V6.6M13 12.6V10" fill="none" stroke="#1030f0" stroke-width="1.1"/></svg>
<svg style="left:915px;top:61px" width="16" height="16" viewBox="0 0 16 16"><rect x=".5" y=".6" width="15" height="14" fill="#fff" stroke="#6a6a7a" stroke-width="1"/><rect x="1" y="1.1" width="14" height="1.7" fill="#3a5ad0"/><rect x="2" y="4" width="5.4" height="2.6" fill="#9a9a9a"/><rect x="2" y="7.6" width="5.4" height="2.6" fill="#9a9a9a"/><rect x="2" y="11.2" width="5.4" height="2.4" fill="#9a9a9a"/><rect x="8.4" y="4" width="5.6" height="2.6" fill="#f8d020"/><rect x="8.4" y="7.6" width="5.6" height="2.6" fill="#f08a18"/><rect x="8.4" y="11.2" width="5.6" height="2.4" fill="#f8d020"/></svg>
<div style="left:936px;top:60px;width:1px;height:20px;background:#8990A6;"></div>
<svg style="left:943px;top:61px" width="16" height="16" viewBox="0 0 16 16"><defs><radialGradient id="gP" cx=".4" cy=".35" r=".7"><stop offset="0" stop-color="#5aa0ff"/><stop offset=".6" stop-color="#1a4ad0"/><stop offset="1" stop-color="#0a2a88"/></radialGradient></defs><circle cx="8" cy="8" r="7.6" fill="#b4bccc" stroke="#7a8296" stroke-width=".8"/><circle cx="8" cy="8" r="6" fill="url(#gP)"/><path d="M6 12.6L7.6 4H10Q12.4 4.4 11.8 6.8Q11 8.8 8.4 8.6" fill="none" stroke="#eaf2ff" stroke-width="1.6"/></svg>
<svg style="left:966.5px;top:64px" width="13" height="10" viewBox="0 0 13 10"><rect x=".8" y="2" width="11.4" height="7.4" fill="#b4b8bc" stroke="#8e9298" stroke-width="1"/><rect x="3" y=".6" width="3.6" height="1.8" fill="#8e9298"/><circle cx="6.6" cy="5.8" r="2.6" fill="#d8dce0" stroke="#7e8288" stroke-width="1"/></svg>
<svg style="left:986.5px;top:61px" width="17" height="16" viewBox="0 0 17 16"><circle cx="3" cy="2.8" r="2" fill="#111"/><circle cx="8" cy="2.8" r="2" fill="#111"/><rect x="1.4" y="4.8" width="8.4" height="4.6" fill="#111"/><path d="M9.8 6L11.4 5V9L9.8 8ZM2.4 9.4L1 14M7.6 9.4L9.6 12" stroke="#111" stroke-width="1.3" fill="#111"/><circle cx="12.6" cy="12.4" r="3.3" fill="#f01010"/></svg>
<svg style="left:1009.4px;top:67.4px" width="6" height="4" viewBox="0 0 6 4"><path d="M0 0H5.4L2.7 3Z" fill="#3a3a3a"/></svg>
<svg style="left:1018.4px;top:72.8px" width="8" height="4" viewBox="0 0 8 4"><path d="M0 0H7.4L3.7 3.8Z" fill="#3a3a3a"/></svg>
<svg style="left:190.5px;top:90px" width="9" height="6" viewBox="0 0 9 6"><path d="M0 0H8.4L4.2 5Z" fill="#fff"/></svg>
<svg style="left:206px;top:86.4px" width="10" height="12" viewBox="0 0 10 12"><path d="M2.4 1H6.8M2.6 1V6.6M6.4 1V6.6M5.4 1V6.6M.8 6.8H8.4M4.6 7V11.4" fill="none" stroke="#fff" stroke-width="1.2"/></svg>
<svg style="left:223px;top:86.6px" width="13" height="10" viewBox="0 0 13 10"><path d="M1 1L11.2 8.6M11.2 1L1 8.6" stroke="#fff" stroke-width="2.1"/></svg>
<svg style="left:227.2px;top:108.6px" width="9.6" height="5.8" viewBox="0 0 9.6 5.8"><path d="M.8 4.3999999999999995L4.6 .8L8.4 4.3999999999999995" fill="none" stroke="#5a5a5a" stroke-width="2"/></svg>
<svg style="left:227.2px;top:765.6px" width="9.6" height="5.8" viewBox="0 0 9.6 5.8"><path d="M.8 .8L4.6 4.3999999999999995L8.4 .8" fill="none" stroke="#5a5a5a" stroke-width="2"/></svg>
<svg style="left:1403.4px;top:183px" width="12.6" height="7.3" viewBox="0 0 12.6 7.3"><path d="M.8 5.8999999999999995L6.1 .8L11.4 5.8999999999999995" fill="none" stroke="#505050" stroke-width="2.2"/></svg>
<svg style="left:1403.4px;top:464px" width="12.6" height="7.3" viewBox="0 0 12.6 7.3"><path d="M.8 .8L6.1 5.8999999999999995L11.4 .8" fill="none" stroke="#505050" stroke-width="2.2"/></svg>
<svg style="left:1405px;top:547px" width="10" height="6.0" viewBox="0 0 10 6.0"><path d="M.8 4.6L4.8 .8L8.8 4.6" fill="none" stroke="#505050" stroke-width="1.5"/></svg>
<svg style="left:1405px;top:783.5px" width="10" height="6.0" viewBox="0 0 10 6.0"><path d="M.8 .8L4.8 4.6L8.8 .8" fill="none" stroke="#505050" stroke-width="1.5"/></svg>
<svg style="left:1402px;top:525.2px" width="11" height="6.5" viewBox="0 0 11 6.5"><path d="M.8 .8L5.3 5.1L9.8 .8" fill="none" stroke="#3a3a3a" stroke-width="1.1"/></svg>
<svg style="left:985.8px;top:157.2px" width="6" height="3" viewBox="0 0 6 3"><path d="M0 0H5.2L2.6 2.8Z" fill="#a8a8a8"/></svg>
<svg style="left:1402px;top:147.5px" width="10" height="10" viewBox="0 0 10 10"><path d="M1 1L9 9M9 1L1 9" stroke="#5a5a5a" stroke-width="1.8"/></svg>
<svg style="left:1402px;top:499.5px" width="9.4" height="9.4" viewBox="0 0 9.4 9.4"><path d="M1 1L8.4 8.4M8.4 1L1 8.4" stroke="#6a6a6a" stroke-width="1.6"/></svg>
<svg style="left:251.3px;top:118px" width="9.8" height="9.8" viewBox="0 0 9.8 9.8"><path d="M1 1L8.8 8.8M8.8 1L1 8.8" stroke="#6a6a6a" stroke-width="2"/></svg>
<svg style="left:269px;top:118.4px" width="9" height="9" viewBox="0 0 9 9"><path d="M1 1L7.6 7.6M8 2.4V8H2.4" fill="none" stroke="#6a6a6a" stroke-width="1.5"/></svg>
<svg style="left:254.6px;top:88.4px" width="15" height="12" viewBox="0 0 15 12"><rect x=".4" y="1.6" width="14" height="10.2" fill="#050505"/><rect x="0" y="0" width="14.8" height="1.7" fill="#0a18c8"/><rect x="2.4" y="4.2" width="3" height="3" fill="#e81010"/><rect x="9.6" y="3" width="2.8" height="2.8" fill="#e81010"/><rect x="1.8" y="7.2" width="5" height="3.4" fill="#18c818"/><rect x="10.8" y="8.6" width="3" height="2" fill="#18c818"/><rect x="6" y="5.6" width="3.6" height="4.4" fill="#f0e818"/><rect x="10.2" y="5" width="3" height="3.6" fill="#f0e818"/><rect x="6.8" y="3.6" width="2.8" height="4.8" fill="#1838f0"/><rect x="7.4" y="7.4" width="1.6" height="1.8" fill="#20d8e8"/></svg>
<svg style="left:987.4px;top:88.4px" width="15" height="12" viewBox="0 0 15 12"><rect x=".4" y="1.6" width="14" height="10.2" fill="#050505"/><rect x="0" y="0" width="14.8" height="1.7" fill="#0a18c8"/><rect x="2.4" y="4.2" width="3" height="3" fill="#e81010"/><rect x="9.6" y="3" width="2.8" height="2.8" fill="#e81010"/><rect x="1.8" y="7.2" width="5" height="3.4" fill="#18c818"/><rect x="10.8" y="8.6" width="3" height="2" fill="#18c818"/><rect x="6" y="5.6" width="3.6" height="4.4" fill="#f0e818"/><rect x="10.2" y="5" width="3" height="3.6" fill="#f0e818"/><rect x="6.8" y="3.6" width="2.8" height="4.8" fill="#1838f0"/><rect x="7.4" y="7.4" width="1.6" height="1.8" fill="#20d8e8"/></svg>
<svg style="left:1066.3px;top:88.4px" width="15" height="12" viewBox="0 0 15 12"><rect x=".4" y="1.6" width="14" height="10.2" fill="#050505"/><rect x="0" y="0" width="14.8" height="1.7" fill="#0a18c8"/><rect x="2.4" y="4.2" width="3" height="3" fill="#e81010"/><rect x="9.6" y="3" width="2.8" height="2.8" fill="#e81010"/><rect x="1.8" y="7.2" width="5" height="3.4" fill="#18c818"/><rect x="10.8" y="8.6" width="3" height="2" fill="#18c818"/><rect x="6" y="5.6" width="3.6" height="4.4" fill="#f0e818"/><rect x="10.2" y="5" width="3" height="3.6" fill="#f0e818"/><rect x="6.8" y="3.6" width="2.8" height="4.8" fill="#1838f0"/><rect x="7.4" y="7.4" width="1.6" height="1.8" fill="#20d8e8"/></svg>
<svg style="left:1281.2px;top:88.4px" width="15" height="12" viewBox="0 0 15 12"><rect x=".4" y="1.6" width="14" height="10.2" fill="#050505"/><rect x="0" y="0" width="14.8" height="1.7" fill="#0a18c8"/><rect x="2.4" y="4.2" width="3" height="3" fill="#e81010"/><rect x="9.6" y="3" width="2.8" height="2.8" fill="#e81010"/><rect x="1.8" y="7.2" width="5" height="3.4" fill="#18c818"/><rect x="10.8" y="8.6" width="3" height="2" fill="#18c818"/><rect x="6" y="5.6" width="3.6" height="4.4" fill="#f0e818"/><rect x="10.2" y="5" width="3" height="3.6" fill="#f0e818"/><rect x="6.8" y="3.6" width="2.8" height="4.8" fill="#1838f0"/><rect x="7.4" y="7.4" width="1.6" height="1.8" fill="#20d8e8"/></svg>
<svg style="left:1397.6px;top:89.5px" width="6" height="11" viewBox="0 0 6 11"><path d="M5 .8L.8 5.4L5 10Z" fill="none" stroke="#7c7c7c" stroke-width="1"/></svg>
<svg style="left:1409.6px;top:89.5px" width="6" height="11" viewBox="0 0 6 11"><path d="M.8 .8L5 5.4L.8 10Z" fill="none" stroke="#7c7c7c" stroke-width="1"/></svg>
<svg style="left:11px;top:801px" width="6" height="18" viewBox="0 0 6 18"><rect x="0.6" y="0.6" width="1" height="1" fill="#f4f6fb"/><rect x="0" y="0" width="1" height="1" fill="#5c6a8c"/><rect x="4.6" y="0.6" width="1" height="1" fill="#f4f6fb"/><rect x="4" y="0" width="1" height="1" fill="#5c6a8c"/><rect x="2.6" y="2.6" width="1" height="1" fill="#f4f6fb"/><rect x="2" y="2" width="1" height="1" fill="#5c6a8c"/><rect x="0.6" y="4.6" width="1" height="1" fill="#f4f6fb"/><rect x="0" y="4" width="1" height="1" fill="#5c6a8c"/><rect x="4.6" y="4.6" width="1" height="1" fill="#f4f6fb"/><rect x="4" y="4" width="1" height="1" fill="#5c6a8c"/><rect x="2.6" y="6.6" width="1" height="1" fill="#f4f6fb"/><rect x="2" y="6" width="1" height="1" fill="#5c6a8c"/><rect x="0.6" y="8.6" width="1" height="1" fill="#f4f6fb"/><rect x="0" y="8" width="1" height="1" fill="#5c6a8c"/><rect x="4.6" y="8.6" width="1" height="1" fill="#f4f6fb"/><rect x="4" y="8" width="1" height="1" fill="#5c6a8c"/><rect x="2.6" y="10.6" width="1" height="1" fill="#f4f6fb"/><rect x="2" y="10" width="1" height="1" fill="#5c6a8c"/><rect x="0.6" y="12.6" width="1" height="1" fill="#f4f6fb"/><rect x="0" y="12" width="1" height="1" fill="#5c6a8c"/><rect x="4.6" y="12.6" width="1" height="1" fill="#f4f6fb"/><rect x="4" y="12" width="1" height="1" fill="#5c6a8c"/><rect x="2.6" y="14.6" width="1" height="1" fill="#f4f6fb"/><rect x="2" y="14" width="1" height="1" fill="#5c6a8c"/><rect x="0.6" y="16.6" width="1" height="1" fill="#f4f6fb"/><rect x="0" y="16" width="1" height="1" fill="#5c6a8c"/><rect x="4.6" y="16.6" width="1" height="1" fill="#f4f6fb"/><rect x="4" y="16" width="1" height="1" fill="#5c6a8c"/></svg>
<svg style="left:26px;top:801.5px" width="16" height="16" viewBox="0 0 16 16"><rect x="1" y="1.6" width="15" height="13.4" fill="#fff"/><rect x="1" y="2.4" width="6.8" height="12" fill="#a8c8f0"/><rect x=".3" y=".7" width="7.6" height="1.8" fill="#14207a"/><rect x="7.9" y=".7" width="8.1" height="1.8" fill="#a8a8a8"/><rect x=".3" y=".7" width="1.3" height="14.6" fill="#14207a"/><rect x=".3" y="14.2" width="15.7" height="1.1" fill="#14207a"/><path d="M6.6 8Q7 5.2 10 5.2H11.4M13.6 8.6Q13.2 11.4 10.2 11.4H8.8" fill="none" stroke="#b8903a" stroke-width="1.9"/><path d="M10.8 3L14 5.2L10.8 7.4ZM9.4 9.2L6.2 11.4L9.4 13.6Z" fill="#b8903a"/></svg>
<svg style="left:48px;top:801.5px" width="17" height="16" viewBox="0 0 17 16"><rect x=".6" y="1" width="13.2" height="10.8" fill="#fff" stroke="#111" stroke-width="1.2"/><rect x="0" y="0" width="14.4" height="1.9" fill="#14207a"/><path d="M2.4 4H7.6M2.4 6.1H7.6M2.4 8.2H7.6M2.4 10.2H6" stroke="#555" stroke-width=".9"/><path d="M6.8 9.4H11.6V7.4L16 11.1L11.6 14.8V12.8H6.8Z" fill="#10e0f4" stroke="#111" stroke-width=".9"/></svg>
<svg style="left:70px;top:801.5px" width="16" height="16" viewBox="0 0 16 16"><path d="M2.2 6.9V13.2L6.2 10.5Z" fill="none" stroke="#111" stroke-width=".8"/><circle cx="2.4" cy="6.9" r="2.3" fill="#f8f000" stroke="#111" stroke-width=".5"/><circle cx="2.4" cy="13.2" r="2.3" fill="#f8f000" stroke="#111" stroke-width=".5"/><circle cx="6.2" cy="10.4" r="2.4" fill="#8a8420" stroke="#111" stroke-width=".5"/><path d="M5.4 2.8L15.4 12.4" stroke="#161690" stroke-width="2.3"/><path d="M5 2.4L8 5.2" stroke="#f4e020" stroke-width="2.5"/><path d="M11.2 .2V3.6M9.5 1.9H12.9M13.8 2.6V5.4M12.4 4H15.2" stroke="#111" stroke-width="1"/><rect x=".2" y=".8" width="1" height="1" fill="#111"/></svg>
<svg style="left:92px;top:801.5px" width="16" height="16" viewBox="0 0 16 16"><rect x="4.4" y="1" width="11" height="12.2" fill="#fff" stroke="#9a9a9a" stroke-width="1"/><path d="M.9 14.6L7.6 6.6" stroke="#111" stroke-width="2.6"/><path d="M.9 14.6L7.6 6.6" stroke="#a01818" stroke-width="1.3"/><path d="M3.4 6.2Q6.4 2.4 9.6 3.8L12.6 7.6L10.6 9.8L8.4 7Q6.4 6.4 4.6 7.6Z" fill="#f8ec20" stroke="#111" stroke-width=".9"/></svg>
<svg style="left:114.2px;top:807.6px" width="6" height="4" viewBox="0 0 6 4"><path d="M0 0H5.4L2.7 3Z" fill="#555"/></svg>
<div style="left:124px;top:800px;width:1px;height:20px;background:#8990A6;"></div>
<div style="left:152px;top:800px;width:1px;height:20px;background:#8990A6;"></div>
<svg style="left:160px;top:801.5px" width="16" height="16" viewBox="0 0 16 16"><path d="M1.6 13V7.6L8.2 2L14.4 6.8L8 13.8L3.6 9.4" fill="none" stroke="#111" stroke-width="2"/><path d="M4.6 8.6L9.6 4L12.6 6.6L7.8 11.8Z" fill="#8e8e8e"/><path d="M4.6 8.6L6.6 6.8L9.8 9.6L7.8 11.8Z" fill="#f8f020"/></svg>
<svg style="left:181px;top:801.5px" width="16" height="16" viewBox="0 0 16 16"><circle cx="11" cy="4.4" r="3.7" fill="#f8f000" stroke="#111" stroke-width=".8"/><circle cx="4.4" cy="11.6" r="3.7" fill="#f8f000" stroke="#111" stroke-width=".8"/><circle cx="11.8" cy="11.6" r="3.7" fill="#f8f000" stroke="#111" stroke-width=".8"/><path d="M4.2 .4V8.2M.2 4.4H8" stroke="#111" stroke-width="2.1"/></svg>
<svg style="left:203px;top:801.5px" width="16" height="16" viewBox="0 0 16 16"><path d="M.2 8H9.4M3.8 4V12" stroke="#111" stroke-width="2.1"/><circle cx="11.8" cy="8" r="3.9" fill="#f8f000" stroke="#111" stroke-width=".8"/></svg>
<svg style="left:225px;top:801.5px" width="16" height="16" viewBox="0 0 16 16"><path d="M4.8 4.4Q4.8 1.2 8.2 1.2Q11.6 1.4 11.4 4Q11.2 5.8 8.6 7.2V9" fill="none" stroke="#111" stroke-width="2.2"/><rect x="7.6" y="11" width="2" height="2" fill="#111"/><circle cx="3.4" cy="12.4" r="2.5" fill="#eef0f6" stroke="#111" stroke-width="1.2"/><circle cx="13" cy="12.4" r="2.5" fill="#eef0f6" stroke="#111" stroke-width="1.2"/></svg>
<svg style="left:247.4px;top:801.5px" width="16" height="16" viewBox="0 0 16 16"><path d="M2.8 2.8H13.4V13.2H2.8ZM2.8 2.8L13.4 13.2M13.4 2.8L2.8 13.2" fill="none" stroke="#1030f0" stroke-width="1.2"/><circle cx="2.8" cy="2.8" r="2.1" fill="#eef0f6" stroke="#111" stroke-width="1.1"/><circle cx="2.8" cy="13.2" r="2.1" fill="#eef0f6" stroke="#111" stroke-width="1.1"/><circle cx="13.4" cy="2.8" r="2.1" fill="#eef0f6" stroke="#111" stroke-width="1.1"/><circle cx="13.4" cy="13.2" r="2.1" fill="#eef0f6" stroke="#111" stroke-width="1.1"/></svg>
<svg style="left:269.8px;top:801.5px" width="16" height="16" viewBox="0 0 16 16"><path d="M5.6 .8H10.4V4.8H12.8L8 9.8L3.2 4.8H5.6Z" fill="#fff" stroke="#111" stroke-width="1"/><circle cx="3.6" cy="12.4" r="2.5" fill="#eef0f6" stroke="#111" stroke-width="1.2"/><circle cx="12.6" cy="12.4" r="2.5" fill="#eef0f6" stroke="#111" stroke-width="1.2"/><path d="M6.2 12.4H10" stroke="#111" stroke-width="1"/></svg>
<svg style="left:291.6px;top:801.5px" width="16" height="16" viewBox="0 0 16 16"><circle cx="7.6" cy="8" r="6.5" fill="#f2f4f9" stroke="#111" stroke-width="1.2" stroke-dasharray="1.05 1.05"/><circle cx="7.6" cy="8" r="3.9" fill="#8a7e00" stroke="#111" stroke-width=".8"/></svg>
<svg style="left:312.8px;top:807.6px" width="6" height="4" viewBox="0 0 6 4"><path d="M0 0H5.4L2.7 3Z" fill="#555"/></svg>
<div style="left:323px;top:800px;width:1px;height:20px;background:#8990A6;"></div>
<svg style="left:330px;top:801.5px" width="16" height="16" viewBox="0 0 16 16"><path d="M1 8L4.4 2H11.2L14.6 8L11.2 14H4.4Z" fill="none" stroke="#1030f0" stroke-width="1.9"/></svg>
<svg style="left:352px;top:801.5px" width="16" height="16" viewBox="0 0 16 16"><path d="M1 8L4.4 2H11.2L14.6 8L11.2 14H4.4Z" fill="none" stroke="#1030f0" stroke-width="1.9"/><path d="M4.4 2H11.2L14.6 8L11.2 14H8" fill="none" stroke="#f8f000" stroke-width="1.9"/></svg>
<svg style="left:374.5px;top:801.5px" width="16" height="16" viewBox="0 0 16 16"><path d="M1.4 4H10V13.4H1.4ZM1.4 4L4 1.6H12.6V11L10 13.4M10 4L12.6 1.6" fill="none" stroke="#8a8a8a" stroke-width="1.1"/><path d="M4.4 4.2H10.6L13 6.2L10.6 8.2H4.4Z" fill="none" stroke="#1030f0" stroke-width="1.2"/><path d="M6 9H12.6L15 11.2L12.6 13.4H6" fill="none" stroke="#1030f0" stroke-width="1.2"/></svg>
<svg style="left:396.5px;top:801.5px" width="16" height="16" viewBox="0 0 16 16"><path d="M1.6 1.4l5.4 5.4m0-5.4l-5.4 5.4M1.6 8.8l5.4 5.4m0-5.4l-5.4 5.4M9 1.4l5.4 5.4m0-5.4l-5.4 5.4M9 8.8l5.4 5.4m0-5.4l-5.4 5.4" stroke="#1030f0" stroke-width="1.5"/><path d="M2.9000000000000004 2.7l2.8 2.8m0-2.8l-2.8 2.8M2.9000000000000004 10.100000000000001l2.8 2.8m0-2.8l-2.8 2.8M10.3 2.7l2.8 2.8m0-2.8l-2.8 2.8M10.3 10.100000000000001l2.8 2.8m0-2.8l-2.8 2.8M6 6.2L10 10M10 6.2L6 10" stroke="#111" stroke-width="1.7"/></svg>
<svg style="left:419px;top:801.5px" width="16" height="16" viewBox="0 0 16 16"><path d="M1.6 1.4l5.4 5.4m0-5.4l-5.4 5.4M1.6 8.8l5.4 5.4m0-5.4l-5.4 5.4M9 1.4l5.4 5.4m0-5.4l-5.4 5.4M9 8.8l5.4 5.4m0-5.4l-5.4 5.4" stroke="#e01010" stroke-width="1.5"/><path d="M2.9000000000000004 2.7l2.8 2.8m0-2.8l-2.8 2.8M2.9000000000000004 10.100000000000001l2.8 2.8m0-2.8l-2.8 2.8M10.3 2.7l2.8 2.8m0-2.8l-2.8 2.8M10.3 10.100000000000001l2.8 2.8m0-2.8l-2.8 2.8M6 6.2L10 10M10 6.2L6 10" stroke="#111" stroke-width="1.7"/></svg>
<div style="left:439px;top:800px;width:1px;height:20px;background:#8990A6;"></div>
<svg style="left:446px;top:801.5px" width="16" height="16" viewBox="0 0 16 16"><path d="M4 12L11.6 4.4" stroke="#1030f0" stroke-width="1.8" stroke-dasharray="1.6 .8"/><circle cx="11.8" cy="4" r="3.2" fill="#f8f000" stroke="#111" stroke-width=".8"/><circle cx="3.8" cy="12" r="3" fill="#a8d0f8" stroke="#111" stroke-width=".8"/></svg>
<svg style="left:468px;top:801.5px" width="16" height="16" viewBox="0 0 16 16"><path d="M2.6 8L5.4 4.6H10.6L13.4 8L10.6 11.4H5.4Z" fill="none" stroke="#111" stroke-width="1.5"/><path d="M5.4 4.6L2.6 1.6M10.6 4.6L13.4 1.6M5.4 11.4L2.6 14.4M10.6 11.4L13.4 14.4" stroke="#1030f0" stroke-width="1.6" stroke-dasharray="1.2 .6"/><rect x="0" y="0.4" width="3" height="2" fill="#f8f000"/><rect x="0" y="13.6" width="3" height="2" fill="#f8f000"/><rect x="13" y="0.4" width="3" height="2" fill="#f8f000"/><rect x="13" y="13.6" width="3" height="2" fill="#f8f000"/></svg>
<svg style="left:490.5px;top:801.5px" width="16" height="16" viewBox="0 0 16 16"><path d="M4.6 3.6l2.4-2.8h5.6l2.4 2.8l-2.4 2.8h-5.6Z" fill="none" stroke="#f0e000" stroke-width="1.3"/><path d="M0.8 11.6l2.4-2.8h5.6l2.4 2.8l-2.4 2.8h-5.6Z" fill="none" stroke="#111" stroke-width="1.3"/></svg>
<svg style="left:512.5px;top:801.5px" width="16" height="16" viewBox="0 0 16 16"><path d="M4.6 3.6l2.4-2.8h5.6l2.4 2.8l-2.4 2.8h-5.6Z" fill="none" stroke="#d01808" stroke-width="1.4"/><path d="M0.8 11.6l2.4-2.8h5.6l2.4 2.8l-2.4 2.8h-5.6Z" fill="none" stroke="#111" stroke-width="1.3"/></svg>
<div style="left:533px;top:800px;width:1px;height:20px;background:#8990A6;"></div>
<svg style="left:540px;top:801.5px" width="16" height="16" viewBox="0 0 16 16"><path d="M.8 3.4H12.2V15H.8ZM.8 3.4L4 .8H15.2V12.4L12.2 15M12.2 3.4L15.2 .8" fill="none" stroke="#1030f0" stroke-width="1.2"/><path d="M4 .8V12.4H15.2M4 12.4L.8 15" fill="none" stroke="#111" stroke-width="1.1"/></svg>
<svg style="left:563px;top:801.5px" width="16" height="16" viewBox="0 0 16 16"><path d="M7.6 .8L14.6 8L7.6 15.2L.6 8Z" fill="#fff" stroke="#111" stroke-width="1.1"/><path d="M7.6 .8V15.2M.6 8L7.6 9.8L14.6 8" fill="none" stroke="#111" stroke-width=".9"/></svg>
<svg style="left:584px;top:801.5px" width="16" height="16" viewBox="0 0 16 16"><circle cx="2.4" cy="4.6" r="1.5" fill="#f8f000"/><circle cx="2.4" cy="8.0" r="1.5" fill="#1030f0"/><circle cx="2.4" cy="11.399999999999999" r="1.5" fill="#f8f000"/><circle cx="6.0" cy="4.6" r="1.5" fill="#1030f0"/><circle cx="6.0" cy="8.0" r="1.5" fill="#f8f000"/><circle cx="6.0" cy="11.399999999999999" r="1.5" fill="#1030f0"/><circle cx="9.6" cy="4.6" r="1.5" fill="#f8f000"/><circle cx="9.6" cy="8.0" r="1.5" fill="#1030f0"/><circle cx="9.6" cy="11.399999999999999" r="1.5" fill="#f8f000"/><circle cx="13.200000000000001" cy="4.6" r="1.5" fill="#1030f0"/><circle cx="13.200000000000001" cy="8.0" r="1.5" fill="#f8f000"/><circle cx="13.200000000000001" cy="11.399999999999999" r="1.5" fill="#1030f0"/><path d="M.6 5.6Q8 9 15.4 14.4M14.8 4Q7 8 2 14.4" fill="none" stroke="#f01010" stroke-width="1.7"/></svg>
<svg style="left:606px;top:807.6px" width="6" height="4" viewBox="0 0 6 4"><path d="M0 0H5.4L2.7 3Z" fill="#555"/></svg>
<svg style="left:616.5px;top:801.5px" width="18" height="16" viewBox="0 0 18 16"><circle cx="3.4" cy="12.2" r="2.8" fill="#fff" stroke="#111" stroke-width="1"/><text x="6.2" y="8.4" font-family="Liberation Sans" font-size="10" font-weight="700" fill="#111">Fe</text></svg>
<div style="left:638px;top:800px;width:1px;height:20px;background:#8990A6;"></div>
<svg style="left:645px;top:801.5px" width="16" height="16" viewBox="0 0 16 16"><rect x=".7" y=".7" width="14.6" height="14.6" fill="#fff" stroke="#1030f0" stroke-width="1.2"/><path d="M8 1.4L10.6 4.6H5.4ZM8 14.6L10.6 11.4H5.4ZM1.4 8L4.6 5.4V10.6ZM14.6 8L11.4 5.4V10.6Z" fill="#111"/><path d="M8 4V12M4 8H12" stroke="#111" stroke-width="1.4"/><circle cx="8" cy="8" r="1.9" fill="#f8f000"/></svg>
<svg style="left:667px;top:807.6px" width="6" height="4" viewBox="0 0 6 4"><path d="M0 0H5.4L2.7 3Z" fill="#555"/></svg>
<div style="left:677px;top:800px;width:1px;height:20px;background:#8990A6;"></div>
<span class="t" style="left:684.2px;top:801.6px;font-family:'Liberation Serif';font-size:13.5px;line-height:16px;font-weight:700;font-style:italic;color:#1428b4;transform:scaleX(1.22);transform-origin:0 0">M</span>
<svg style="left:706.5px;top:801.5px" width="16" height="16" viewBox="0 0 16 16"><rect x=".7" y="1.2" width="13.4" height="12.8" fill="#e8ecf8" stroke="#1428b4" stroke-width="1.2"/><circle cx="5.4" cy="5.6" r="3.3" fill="#fff" stroke="#e81818" stroke-width="1"/><circle cx="8.8" cy="8.6" r="3.4" fill="#10807a"/></svg>
<svg style="left:726.6px;top:813px" width="8" height="4" viewBox="0 0 8 4"><path d="M0 0H7.4L3.7 3.8Z" fill="#4a4a4a"/></svg>
<svg style="left:748px;top:801px" width="6" height="18" viewBox="0 0 6 18"><rect x="0.6" y="0.6" width="1" height="1" fill="#f4f6fb"/><rect x="0" y="0" width="1" height="1" fill="#5c6a8c"/><rect x="4.6" y="0.6" width="1" height="1" fill="#f4f6fb"/><rect x="4" y="0" width="1" height="1" fill="#5c6a8c"/><rect x="2.6" y="2.6" width="1" height="1" fill="#f4f6fb"/><rect x="2" y="2" width="1" height="1" fill="#5c6a8c"/><rect x="0.6" y="4.6" width="1" height="1" fill="#f4f6fb"/><rect x="0" y="4" width="1" height="1" fill="#5c6a8c"/><rect x="4.6" y="4.6" width="1" height="1" fill="#f4f6fb"/><rect x="4" y="4" width="1" height="1" fill="#5c6a8c"/><rect x="2.6" y="6.6" width="1" height="1" fill="#f4f6fb"/><rect x="2" y="6" width="1" height="1" fill="#5c6a8c"/><rect x="0.6" y="8.6" width="1" height="1" fill="#f4f6fb"/><rect x="0" y="8" width="1" height="1" fill="#5c6a8c"/><rect x="4.6" y="8.6" width="1" height="1" fill="#f4f6fb"/><rect x="4" y="8" width="1" height="1" fill="#5c6a8c"/><rect x="2.6" y="10.6" width="1" height="1" fill="#f4f6fb"/><rect x="2" y="10" width="1" height="1" fill="#5c6a8c"/><rect x="0.6" y="12.6" width="1" height="1" fill="#f4f6fb"/><rect x="0" y="12" width="1" height="1" fill="#5c6a8c"/><rect x="4.6" y="12.6" width="1" height="1" fill="#f4f6fb"/><rect x="4" y="12" width="1" height="1" fill="#5c6a8c"/><rect x="2.6" y="14.6" width="1" height="1" fill="#f4f6fb"/><rect x="2" y="14" width="1" height="1" fill="#5c6a8c"/><rect x="0.6" y="16.6" width="1" height="1" fill="#f4f6fb"/><rect x="0" y="16" width="1" height="1" fill="#5c6a8c"/><rect x="4.6" y="16.6" width="1" height="1" fill="#f4f6fb"/><rect x="4" y="16" width="1" height="1" fill="#5c6a8c"/></svg>
<div style="left:760px;top:798px;width:22px;height:22px;background:#FFF1C4;border:1px solid #E5C365;box-sizing:border-box;"></div>
<svg style="left:767px;top:802px" width="10" height="15" viewBox="0 0 10 15"><path d="M1 .8V11.6L3.6 9.2L5.6 13.8L7.4 13L5.5 8.6H8.8Z" fill="#fff" stroke="#111" stroke-width="1"/></svg>
<svg style="left:785px;top:801.5px" width="17" height="16" viewBox="0 0 17 16"><path d="M8.1 1L10.6 5.7L15.6 8.2L10.6 10.8L8.1 15.2L5.5 10.8L.6 8.2L5.5 5.7Z" fill="none" stroke="#111" stroke-width="1.9" stroke-linejoin="miter"/><path d="M8.1 3V13.4M3 8.2H13.2" stroke="#111" stroke-width="1.7"/></svg>
<svg style="left:807.5px;top:801.5px" width="15" height="16" viewBox="0 0 15 16"><path d="M12.6 6.4A5.4 5.4 0 1 1 8.6 2.9" fill="none" stroke="#111" stroke-width="2.4"/><path d="M7.6 .2L12.6 3.2L7.6 6.2Z" fill="#111"/></svg>
<svg style="left:829px;top:801.5px" width="16" height="16" viewBox="0 0 16 16"><path d="M8 .2L11.6 4.6H4.4ZM8 15.2L11.6 10.8H4.4ZM.6 7.7L5 4.1V11.3ZM15.4 7.7L11 4.1V11.3Z" fill="#111"/><path d="M8 3V12.4M3 7.7H13" stroke="#111" stroke-width="2.5"/></svg>
<svg style="left:851px;top:801.5px" width="16" height="16" viewBox="0 0 16 16"><path d="M1.2 5V1.6H4.6M10.6 1.6H14V5M14 10.6V14H10.6M4.6 14H1.2V10.6" fill="none" stroke="#111" stroke-width="1.7"/><path d="M2 2.4L5.4 5.8M13.2 2.4L9.8 5.8M13.2 13.2L9.8 9.8M2 13.2L5.4 9.8" stroke="#111" stroke-width="1.3"/><rect x="5.4" y="5.6" width="4.4" height="4.4" fill="none" stroke="#111" stroke-width="1.8"/></svg>
<svg style="left:873px;top:801.5px" width="15" height="16" viewBox="0 0 15 16"><path d="M13.8 1.9L.9 8.2L13.8 12.8" fill="none" stroke="#111" stroke-width="2.5" stroke-linejoin="miter"/><path d="M12.3 5.6V9.6" stroke="#111" stroke-width="2" stroke-dasharray="1.5 1"/></svg>
<svg style="left:895px;top:801.5px" width="15" height="16" viewBox="0 0 15 16"><path d="M.6 7.2L7.7 1.4L14.4 7.2H10.2L12 12H13.4V13.6H1.6V12H3.2L5 7.2Z" fill="#111"/><path d="M7.6 3.6V11.4" stroke="#fff" stroke-width="1"/><path d="M5.6 6.6H9.6" stroke="#fff" stroke-width=".8"/></svg>
<svg style="left:917.5px;top:801.5px" width="16" height="16" viewBox="0 0 16 16"><circle cx="7.1" cy="8.2" r="5.9" fill="none" stroke="#111" stroke-width="1.7" stroke-dasharray="1.5 1.6"/><circle cx="7.1" cy="8.2" r="2.4" fill="#fff" stroke="#111" stroke-width="2.3"/><path d="M8 4.6Q12 4 12.6 8" fill="none" stroke="#111" stroke-width="2"/></svg>
<svg style="left:939px;top:801.5px" width="16" height="16" viewBox="0 0 16 16"><circle cx="3.6" cy="4.8" r="2.3" fill="#fff" stroke="#111" stroke-width="2.3"/><path d="M4 1.4Q8.6 .2 8.8 5" fill="none" stroke="#111" stroke-width="2"/><path d="M.4 10.6H7" stroke="#111" stroke-width="1.7" stroke-dasharray="1.7 1.1"/><rect x="7.6" y="5.6" width="2.5" height="8.2" fill="#ecece4" stroke="#b4b4ac" stroke-width=".7"/><rect x="11.4" y="5.6" width="2.5" height="8.2" fill="#ecece4" stroke="#b4b4ac" stroke-width=".7"/></svg>
<svg style="left:961px;top:801.5px" width="16" height="16" viewBox="0 0 16 16"><circle cx="3.6" cy="4.8" r="2.3" fill="#fff" stroke="#111" stroke-width="2.3"/><path d="M4 1.4Q8.6 .2 8.8 5" fill="none" stroke="#111" stroke-width="2"/><path d="M.4 10.6H7" stroke="#111" stroke-width="1.7" stroke-dasharray="1.7 1.1"/><rect x="7.6" y="6.9" width="7.2" height="7" fill="#8c8c8c" stroke="#6a6a6a" stroke-width=".7"/></svg>
<svg style="left:981.8px;top:813px" width="8" height="4" viewBox="0 0 8 4"><path d="M0 0H7.4L3.7 3.8Z" fill="#4a4a4a"/></svg>
<svg style="left:1003px;top:801px" width="6" height="18" viewBox="0 0 6 18"><rect x="0.6" y="0.6" width="1" height="1" fill="#f4f6fb"/><rect x="0" y="0" width="1" height="1" fill="#5c6a8c"/><rect x="4.6" y="0.6" width="1" height="1" fill="#f4f6fb"/><rect x="4" y="0" width="1" height="1" fill="#5c6a8c"/><rect x="2.6" y="2.6" width="1" height="1" fill="#f4f6fb"/><rect x="2" y="2" width="1" height="1" fill="#5c6a8c"/><rect x="0.6" y="4.6" width="1" height="1" fill="#f4f6fb"/><rect x="0" y="4" width="1" height="1" fill="#5c6a8c"/><rect x="4.6" y="4.6" width="1" height="1" fill="#f4f6fb"/><rect x="4" y="4" width="1" height="1" fill="#5c6a8c"/><rect x="2.6" y="6.6" width="1" height="1" fill="#f4f6fb"/><rect x="2" y="6" width="1" height="1" fill="#5c6a8c"/><rect x="0.6" y="8.6" width="1" height="1" fill="#f4f6fb"/><rect x="0" y="8" width="1" height="1" fill="#5c6a8c"/><rect x="4.6" y="8.6" width="1" height="1" fill="#f4f6fb"/><rect x="4" y="8" width="1" height="1" fill="#5c6a8c"/><rect x="2.6" y="10.6" width="1" height="1" fill="#f4f6fb"/><rect x="2" y="10" width="1" height="1" fill="#5c6a8c"/><rect x="0.6" y="12.6" width="1" height="1" fill="#f4f6fb"/><rect x="0" y="12" width="1" height="1" fill="#5c6a8c"/><rect x="4.6" y="12.6" width="1" height="1" fill="#f4f6fb"/><rect x="4" y="12" width="1" height="1" fill="#5c6a8c"/><rect x="2.6" y="14.6" width="1" height="1" fill="#f4f6fb"/><rect x="2" y="14" width="1" height="1" fill="#5c6a8c"/><rect x="0.6" y="16.6" width="1" height="1" fill="#f4f6fb"/><rect x="0" y="16" width="1" height="1" fill="#5c6a8c"/><rect x="4.6" y="16.6" width="1" height="1" fill="#f4f6fb"/><rect x="4" y="16" width="1" height="1" fill="#5c6a8c"/></svg>
<svg style="left:1018px;top:801.5px" width="16" height="16" viewBox="0 0 16 16"><path d="M1.4 2V14.2H14.6M4.6 14V6.6M7.8 14V6.6M11 14V6.6M14 14V6.6" fill="none" stroke="#111" stroke-width="1.2"/></svg>
<svg style="left:1040px;top:801.5px" width="16" height="16" viewBox="0 0 16 16"><path d="M1 14.4L7.4 1.6M1 14.4H14.4L8.6 5.2" fill="none" stroke="#111" stroke-width="1.2"/></svg>
<svg style="left:1062px;top:801.5px" width="16" height="16" viewBox="0 0 16 16"><circle cx="5.4" cy="10.6" r="3.8" fill="none" stroke="#111" stroke-width="1.3"/><path d="M3.6 1.2L5.2 6.6M6.8 7.4L12.8 2.4M8 4.2L12 4" fill="none" stroke="#111" stroke-width="1.5"/><path d="M9.6 1.4L13.8 2.6L11.4 5.2" fill="#111"/></svg>
<svg style="left:1084px;top:801.5px" width="16" height="16" viewBox="0 0 16 16"><path d="M1 6.6L6.2 3.4L8.6 4.8L12.4 2.6L15.4 4.2L9.4 12.6L1.6 13.6Z" fill="#fff" stroke="#111" stroke-width="1.2"/><path d="M1.6 13.6Q6 8.4 11 8.6" fill="none" stroke="#111" stroke-width="1"/></svg>
<svg style="left:1104.6px;top:813px" width="8" height="4" viewBox="0 0 8 4"><path d="M0 0H7.4L3.7 3.8Z" fill="#4a4a4a"/></svg>
<svg style="left:778.5px;top:824.5px" width="14" height="15" viewBox="0 0 14 15"><rect x="2.4" y="4" width="11" height="10.4" fill="#e8eef8" stroke="#9ab" stroke-width=".8"/><rect x="2.4" y="4" width="11" height="2.6" fill="#7ea6e0"/><path d="M3 .2V6M.2 3H6M1 1L5 5M5 1L1 5" stroke="#f8e020" stroke-width="1"/></svg>
<svg style="left:906px;top:825px" width="14" height="15" viewBox="0 0 14 15"><rect x=".5" y=".5" width="13" height="13.6" fill="#d8d4b8" stroke="#8a8870" stroke-width="1"/><path d="M7 1.6L9 4H5ZM7 13L9 10.6H5ZM1.6 7.2L4 5.2V9.2ZM12.4 7.2L10 5.2V9.2Z" fill="#333"/><path d="M7 3.6V11M3.6 7.2H10.4" stroke="#333" stroke-width="1.2"/></svg>
<svg style="left:1024px;top:828px" width="13" height="10" viewBox="0 0 13 10"><rect x=".6" y="2" width="11.4" height="7.4" fill="#9ab0c4" stroke="#c8d4e0" stroke-width="1"/><rect x="2.6" y=".6" width="3.4" height="1.8" fill="#c8d4e0"/><circle cx="6.4" cy="5.8" r="2.5" fill="#48647e" stroke="#dfe8f0" stroke-width="1"/></svg>
<svg style="left:1406px;top:833px" width="9" height="9" viewBox="0 0 9 9"><path d="M7 1V2M7 4V5M4 4V5M7 7V8M4 7V8M1 7V8" stroke="#7aa4c4" stroke-width="1.6"/></svg>
</body></html>
